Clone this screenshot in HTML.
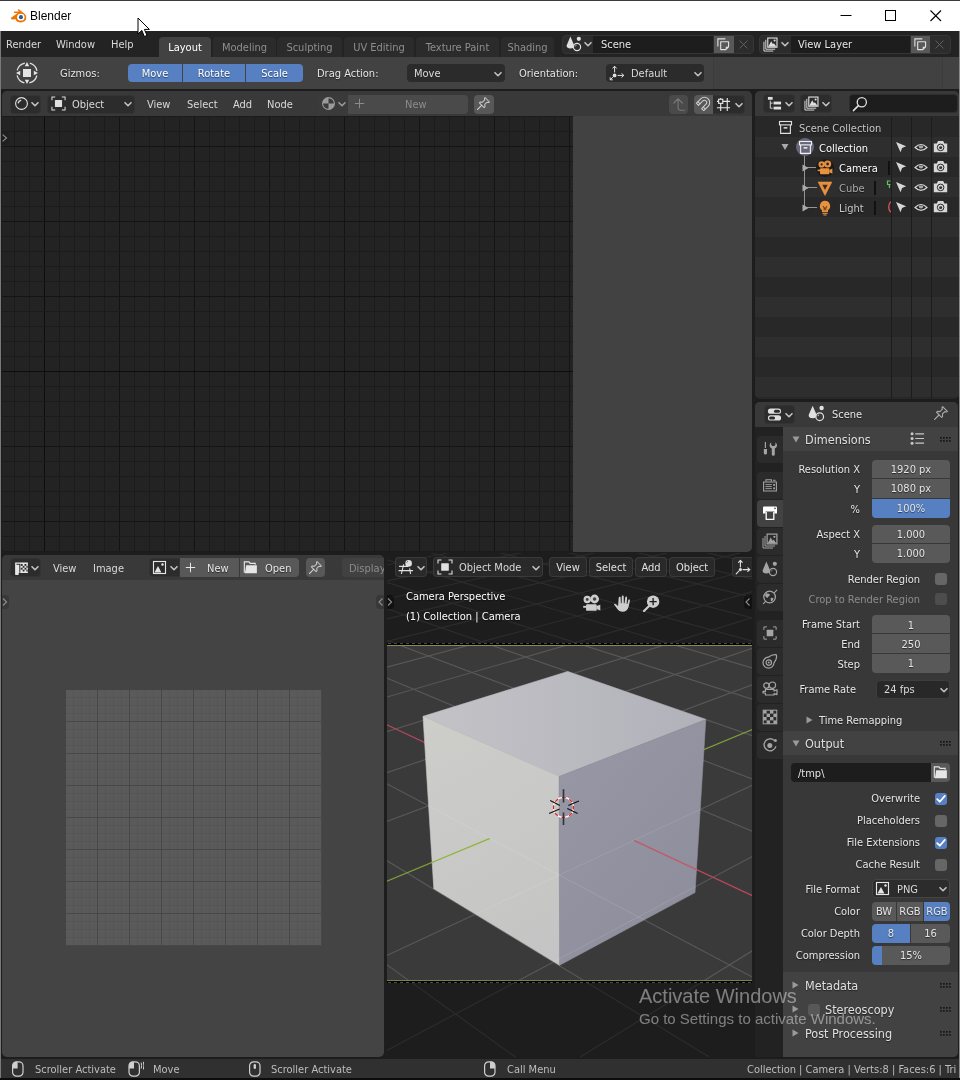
<!DOCTYPE html>
<html lang="en"><head><meta charset="utf-8"><title>Blender</title>
<style>
*{box-sizing:border-box;margin:0;padding:0}
html,body{width:960px;height:1080px;overflow:hidden;background:#1d1d1d}
body{position:relative;font-family:'DejaVu Sans Condensed','DejaVu Sans','Liberation Sans',sans-serif;font-size:11px;color:#e6e6e6;will-change:transform;-webkit-font-smoothing:antialiased}
div,svg{position:absolute}
.t{white-space:nowrap;line-height:14px;height:14px;font-size:11px;color:#e6e6e6;text-shadow:0 1px 1px rgba(0,0,0,.55)}
.m{white-space:nowrap;line-height:14px;height:14px;font-size:11px;color:#d9d9d9}
.d{white-space:nowrap;line-height:14px;height:14px;font-size:11px;color:#8c8c8c}
.r{text-align:right}
.c{text-align:center}
.h{white-space:nowrap;line-height:15px;height:15px;font-size:12.5px;color:#e0e0e0;text-shadow:0 1px 1px rgba(0,0,0,.55)}
</style></head>
<body>
<div style="left:0px;top:0px;width:960px;height:31px;background:#fff;border-top:1px solid #3a3a3a;"></div>
<svg style="left:10px;top:8px;" width="17" height="17" viewBox="0 0 16 16"><path d="M1 9.2 L7.2 4.6 L4.4 4.6 Q3.5 4.6 3.6 3.9 Q3.7 3.3 4.5 3.3 L8.9 3.3 L7.6 2.3 Q7 1.8 7.5 1.3 Q8 .9 8.6 1.3 L14 5.6 Q16 7.6 15.3 10.2 Q14.3 13.4 10.3 13.6 Q6.3 13.6 5.2 10.6 L2.2 10.9 Q.2 10.6 1 9.2Z" fill="#ea7600"/><ellipse cx="10.2" cy="8.6" rx="3.5" ry="3.2" fill="#fff"/><circle cx="10.3" cy="8.6" r="1.9" fill="#235b9c"/></svg>
<div style="left:30px;top:9px;font:12px 'Liberation Sans',sans-serif;color:#000;line-height:15px;white-space:nowrap">Blender</div>
<svg style="left:836px;top:5px;" width="110" height="22" viewBox="0 0 110 22"><path d="M4.5 10.5 H15.5" stroke="#000" stroke-width="1"/><rect x="49.5" y="5.5" width="10" height="10" fill="none" stroke="#000" stroke-width="1"/><path d="M94.5 5.5 L105 16 M105 5.5 L94.5 16" stroke="#000" stroke-width="1.1"/></svg>
<div style="left:0px;top:31px;width:960px;height:26px;background:#232323"></div>
<div class="m" style="left:6px;top:38px;">Render</div>
<div class="m" style="left:56px;top:38px;">Window</div>
<div class="m" style="left:111px;top:38px;">Help</div>
<div style="left:159px;top:37px;width:52px;height:20px;background:#424242;border-radius:4px 4px 0 0;text-align:center;line-height:21px;font-size:11px;color:#fff;overflow:hidden;white-space:nowrap">Layout</div>
<div style="left:213px;top:37px;width:63px;height:20px;background:#2b2b2b;border-radius:4px 4px 0 0;text-align:center;line-height:21px;font-size:11px;color:#8e8e8e;overflow:hidden;white-space:nowrap">Modeling</div>
<div style="left:277px;top:37px;width:65px;height:20px;background:#2b2b2b;border-radius:4px 4px 0 0;text-align:center;line-height:21px;font-size:11px;color:#8e8e8e;overflow:hidden;white-space:nowrap">Sculpting</div>
<div style="left:344px;top:37px;width:70px;height:20px;background:#2b2b2b;border-radius:4px 4px 0 0;text-align:center;line-height:21px;font-size:11px;color:#8e8e8e;overflow:hidden;white-space:nowrap">UV Editing</div>
<div style="left:416px;top:37px;width:83px;height:20px;background:#2b2b2b;border-radius:4px 4px 0 0;text-align:center;line-height:21px;font-size:11px;color:#8e8e8e;overflow:hidden;white-space:nowrap">Texture Paint</div>
<div style="left:501px;top:37px;width:53px;height:20px;background:#2b2b2b;border-radius:4px 4px 0 0;text-align:center;line-height:21px;font-size:11px;color:#8e8e8e;overflow:hidden;white-space:nowrap">Shading</div>
<div style="left:554px;top:31px;width:8px;height:26px;background:#232323"></div>
<div style="left:562px;top:35px;width:192px;height:19px;background:#2c2c2c;border-radius:4px;border:1px solid #363636"></div>
<svg style="left:566px;top:36px;" width="16" height="16" viewBox="0 0 16 16"><path d="M4.4 .6 L8.2 9.4 Q8 12.4 4.4 12.4 Q.6 12.4 .6 9.4Z" fill="#e0e0e0"/><circle cx="12.8" cy="2.8" r="2.1" fill="#e0e0e0"/><circle cx="11" cy="11" r="3.6" fill="#2c2c2c" stroke="#e0e0e0" stroke-width="1.2"/><path d="M9.2 10.4 A2 2 0 0 1 10.4 9.2" fill="none" stroke="#e0e0e0" stroke-width=".9"/></svg>
<svg style="left:583px;top:41px" width="10" height="7" viewBox="0 0 10 7"><path d="M2 1.7 L5 4.7 L8 1.7" fill="none" stroke="#c2c2c2" stroke-width="1.6" stroke-linecap="round" stroke-linejoin="round"/></svg>
<div style="left:593px;top:36px;width:120px;height:17px;background:#1d1d1d"></div>
<div class="t" style="left:601px;top:38px;">Scene</div>
<div style="left:714px;top:36px;width:20px;height:17px;background:#585858"></div>
<svg style="left:716px;top:37px;" width="15" height="15" viewBox="0 0 16 16"><path d="M2 10 V2 H10" fill="none" stroke="#e0e0e0" stroke-width="1.2"/><path d="M5 5 H13.4 V10.4 L10.4 13.4 H5Z" fill="none" stroke="#e0e0e0" stroke-width="1.2" stroke-linejoin="round"/><path d="M13.4 10.4 H10.4 V13.4Z" fill="#e0e0e0"/></svg>
<svg style="left:737px;top:38px;" width="13" height="13" viewBox="0 0 16 16"><path d="M3.5 3.5 L12.5 12.5 M12.5 3.5 L3.5 12.5" stroke="#636363" stroke-width="1.2" stroke-linecap="round"/></svg>
<div style="left:759px;top:35px;width:192px;height:19px;background:#2c2c2c;border-radius:4px;border:1px solid #363636"></div>
<svg style="left:763px;top:37px;" width="15" height="15" viewBox="0 0 16 16"><path d="M1 5 V15 H11" fill="none" stroke="#e0e0e0" stroke-width="1"/><path d="M3 3 V13 H13" fill="none" stroke="#e0e0e0" stroke-width="1"/><rect x="5.1" y="1.1" width="9.8" height="9.8" fill="#2c2c2c" stroke="#e0e0e0" stroke-width="1.2"/><path d="M5.6 10.4 L8.8 4.6 L10.6 7.8 L11.6 6.6 L14.4 10.4Z" fill="#e0e0e0"/><circle cx="12.4" cy="3.8" r="1.1" fill="#e0e0e0"/></svg>
<svg style="left:780px;top:41px" width="10" height="7" viewBox="0 0 10 7"><path d="M2 1.7 L5 4.7 L8 1.7" fill="none" stroke="#c2c2c2" stroke-width="1.6" stroke-linecap="round" stroke-linejoin="round"/></svg>
<div style="left:791px;top:36px;width:119px;height:17px;background:#1d1d1d"></div>
<div class="t" style="left:798px;top:38px;">View Layer</div>
<div style="left:911px;top:36px;width:19px;height:17px;background:#585858"></div>
<svg style="left:913px;top:37px;" width="15" height="15" viewBox="0 0 16 16"><path d="M2 10 V2 H10" fill="none" stroke="#e0e0e0" stroke-width="1.2"/><path d="M5 5 H13.4 V10.4 L10.4 13.4 H5Z" fill="none" stroke="#e0e0e0" stroke-width="1.2" stroke-linejoin="round"/><path d="M13.4 10.4 H10.4 V13.4Z" fill="#e0e0e0"/></svg>
<svg style="left:933px;top:38px;" width="13" height="13" viewBox="0 0 16 16"><path d="M3.5 3.5 L12.5 12.5 M12.5 3.5 L3.5 12.5" stroke="#636363" stroke-width="1.2" stroke-linecap="round"/></svg>
<div style="left:0px;top:57px;width:960px;height:32px;background:#424242"></div>
<div style="left:713px;top:57px;width:230px;height:32px;background:#414141;border-left:1px solid #3c3c3c;border-right:1px solid #3c3c3c"></div>
<svg style="left:15px;top:61px;" width="24" height="24" viewBox="0 0 24 24"><circle cx="12" cy="12" r="10.2" fill="none" stroke="#e4e4e4" stroke-width="1.2" stroke-dasharray="10.9 5.12" stroke-dashoffset="-2.56"/><rect x="8" y="8" width="8" height="8" fill="#e4e4e4"/><path d="M12 1 L14.2 5.2 H9.8Z M12 23 L14.2 18.8 H9.8Z M1 12 L5.2 9.8 V14.2Z M23 12 L18.8 9.8 V14.2Z" fill="#e4e4e4"/></svg>
<div class="t" style="left:60px;top:67px;">Gizmos:</div>
<div style="left:128px;top:64px;width:54px;height:18px;background:#5680c2;border-radius:4px 0 0 4px;text-align:center;line-height:19px;color:#fff;text-shadow:0 1px 1px rgba(0,0,0,.5)">Move</div>
<div style="left:183px;top:64px;width:62px;height:18px;background:#5680c2;border-radius:0;text-align:center;line-height:19px;color:#fff;text-shadow:0 1px 1px rgba(0,0,0,.5)">Rotate</div>
<div style="left:246px;top:64px;width:57px;height:18px;background:#5680c2;border-radius:0 4px 4px 0;text-align:center;line-height:19px;color:#fff;text-shadow:0 1px 1px rgba(0,0,0,.5)">Scale</div>
<div class="t" style="left:317px;top:67px;">Drag Action:</div>
<div style="left:407px;top:64px;width:98px;height:18px;background:#2b2b2b;border-radius:4px"></div>
<div class="m" style="left:414px;top:67px;">Move</div>
<svg style="left:493px;top:71px" width="10" height="7" viewBox="0 0 10 7"><path d="M2 1.7 L5 4.7 L8 1.7" fill="none" stroke="#c2c2c2" stroke-width="1.6" stroke-linecap="round" stroke-linejoin="round"/></svg>
<div class="t" style="left:519px;top:67px;">Orientation:</div>
<div style="left:606px;top:64px;width:98px;height:18px;background:#2b2b2b;border-radius:4px"></div>
<svg style="left:609px;top:65px;" width="16" height="16" viewBox="0 0 16 16"><circle cx="5.6" cy="10.4" r="1.9" fill="#e0e0e0"/><path d="M5.6 7 V1.4 M3.8 3.2 L5.6 1.2 L7.4 3.2 M9 10.4 H14.6 M12.8 8.6 L14.8 10.4 L12.8 12.2 M3.6 12.4 L1.2 14.8 M1.2 12.6 V14.8 H3.4" fill="none" stroke="#e0e0e0" stroke-width="1" stroke-linecap="round" stroke-linejoin="round"/></svg>
<div class="m" style="left:631px;top:67px;">Default</div>
<svg style="left:693px;top:71px" width="10" height="7" viewBox="0 0 10 7"><path d="M2 1.7 L5 4.7 L8 1.7" fill="none" stroke="#c2c2c2" stroke-width="1.6" stroke-linecap="round" stroke-linejoin="round"/></svg>
<div style="left:2px;top:91px;width:750px;height:461px;background:#232323;border-radius:5px;overflow:hidden">
<svg style="left:0px;top:0px;" width="750" height="461" viewBox="0 0 750 461"><path d="M12.5 25 V461" stroke="#1b1b1b"/><path d="M27.5 25 V461" stroke="#1b1b1b"/><path d="M42.5 25 V461" stroke="#0d0d0d"/><path d="M57.5 25 V461" stroke="#1b1b1b"/><path d="M72.5 25 V461" stroke="#1b1b1b"/><path d="M87.5 25 V461" stroke="#1b1b1b"/><path d="M102.5 25 V461" stroke="#1b1b1b"/><path d="M117.5 25 V461" stroke="#141414"/><path d="M132.5 25 V461" stroke="#1b1b1b"/><path d="M147.5 25 V461" stroke="#1b1b1b"/><path d="M162.5 25 V461" stroke="#1b1b1b"/><path d="M177.5 25 V461" stroke="#1b1b1b"/><path d="M192.5 25 V461" stroke="#141414"/><path d="M207.5 25 V461" stroke="#1b1b1b"/><path d="M222.5 25 V461" stroke="#1b1b1b"/><path d="M237.5 25 V461" stroke="#1b1b1b"/><path d="M252.5 25 V461" stroke="#1b1b1b"/><path d="M267.5 25 V461" stroke="#141414"/><path d="M282.5 25 V461" stroke="#1b1b1b"/><path d="M297.5 25 V461" stroke="#1b1b1b"/><path d="M312.5 25 V461" stroke="#1b1b1b"/><path d="M327.5 25 V461" stroke="#1b1b1b"/><path d="M342.5 25 V461" stroke="#141414"/><path d="M357.5 25 V461" stroke="#1b1b1b"/><path d="M372.5 25 V461" stroke="#1b1b1b"/><path d="M387.5 25 V461" stroke="#1b1b1b"/><path d="M402.5 25 V461" stroke="#1b1b1b"/><path d="M417.5 25 V461" stroke="#141414"/><path d="M432.5 25 V461" stroke="#1b1b1b"/><path d="M447.5 25 V461" stroke="#1b1b1b"/><path d="M462.5 25 V461" stroke="#1b1b1b"/><path d="M477.5 25 V461" stroke="#1b1b1b"/><path d="M492.5 25 V461" stroke="#141414"/><path d="M507.5 25 V461" stroke="#1b1b1b"/><path d="M522.5 25 V461" stroke="#1b1b1b"/><path d="M537.5 25 V461" stroke="#1b1b1b"/><path d="M552.5 25 V461" stroke="#1b1b1b"/><path d="M567.5 25 V461" stroke="#141414"/><path d="M0 25.5 H571" stroke="#1b1b1b"/><path d="M0 40.5 H571" stroke="#1b1b1b"/><path d="M0 55.5 H571" stroke="#141414"/><path d="M0 70.5 H571" stroke="#1b1b1b"/><path d="M0 85.5 H571" stroke="#1b1b1b"/><path d="M0 100.5 H571" stroke="#1b1b1b"/><path d="M0 115.5 H571" stroke="#1b1b1b"/><path d="M0 130.5 H571" stroke="#141414"/><path d="M0 145.5 H571" stroke="#1b1b1b"/><path d="M0 160.5 H571" stroke="#1b1b1b"/><path d="M0 175.5 H571" stroke="#1b1b1b"/><path d="M0 190.5 H571" stroke="#1b1b1b"/><path d="M0 205.5 H571" stroke="#141414"/><path d="M0 220.5 H571" stroke="#1b1b1b"/><path d="M0 235.5 H571" stroke="#1b1b1b"/><path d="M0 250.5 H571" stroke="#1b1b1b"/><path d="M0 265.5 H571" stroke="#1b1b1b"/><path d="M0 280.5 H571" stroke="#0d0d0d"/><path d="M0 295.5 H571" stroke="#1b1b1b"/><path d="M0 310.5 H571" stroke="#1b1b1b"/><path d="M0 325.5 H571" stroke="#1b1b1b"/><path d="M0 340.5 H571" stroke="#1b1b1b"/><path d="M0 355.5 H571" stroke="#141414"/><path d="M0 370.5 H571" stroke="#1b1b1b"/><path d="M0 385.5 H571" stroke="#1b1b1b"/><path d="M0 400.5 H571" stroke="#1b1b1b"/><path d="M0 415.5 H571" stroke="#1b1b1b"/><path d="M0 430.5 H571" stroke="#141414"/><path d="M0 445.5 H571" stroke="#1b1b1b"/><path d="M0 460.5 H571" stroke="#1b1b1b"/></svg>
<div style="left:571px;top:25px;width:179px;height:436px;background:#424242"></div>
<div style="left:0px;top:0px;width:750px;height:25px;background:#393939"></div>
<div style="left:8px;top:3.5px;width:31px;height:19px;background:#2c2c2c;border-radius:4px;border:1px solid #333"></div>
<svg style="left:12px;top:5px;" width="15" height="15" viewBox="0 0 16 16"><circle cx="8" cy="8" r="6.3" fill="none" stroke="#e0e0e0" stroke-width="1.2"/><path d="M4.6 7.2 A3.6 3.6 0 0 1 7.2 4.6" fill="none" stroke="#e0e0e0" stroke-width="1.4" stroke-linecap="round"/></svg>
<svg style="left:28px;top:10px" width="10" height="7" viewBox="0 0 10 7"><path d="M2 1.7 L5 4.7 L8 1.7" fill="none" stroke="#c2c2c2" stroke-width="1.6" stroke-linecap="round" stroke-linejoin="round"/></svg>
<div style="left:45px;top:3.5px;width:88px;height:19px;background:#2c2c2c;border-radius:4px;border:1px solid #333"></div>
<svg style="left:49px;top:5px;" width="15" height="15" viewBox="0 0 16 16"><rect x="4.2" y="4.2" width="7.6" height="7.6" rx=".6" fill="#e0e0e0"/><path d="M1 4.5 V1 H4.5 M11.5 1 H15 V4.5 M15 11.5 V15 H11.5 M4.5 15 H1 V11.5" fill="none" stroke="#e0e0e0" stroke-width="1.1"/></svg>
<div class="m" style="left:70px;top:7px;">Object</div>
<svg style="left:121px;top:10px" width="10" height="7" viewBox="0 0 10 7"><path d="M2 1.7 L5 4.7 L8 1.7" fill="none" stroke="#c2c2c2" stroke-width="1.6" stroke-linecap="round" stroke-linejoin="round"/></svg>
<div class="m" style="left:145px;top:7px;">View</div>
<div class="m" style="left:185px;top:7px;">Select</div>
<div class="m" style="left:231px;top:7px;">Add</div>
<div class="m" style="left:265px;top:7px;">Node</div>
<div style="left:317px;top:3.5px;width:149px;height:19px;background:#4a4a4a;border-radius:4px"></div>
<div style="left:317px;top:3.5px;width:29px;height:19px;background:#3a3a3a;border-radius:4px 0 0 4px"></div>
<svg style="left:319px;top:5px;" width="15" height="15" viewBox="0 0 16 16"><circle cx="8" cy="8" r="6.3" fill="none" stroke="#9a9a9a" stroke-width="1.2"/><path d="M8 1.7 A6.3 6.3 0 0 0 1.7 8 H8Z M8 8 H14.3 A6.3 6.3 0 0 1 8 14.3Z" fill="#9a9a9a"/></svg>
<svg style="left:335px;top:10px" width="10" height="7" viewBox="0 0 10 7"><path d="M2 1.7 L5 4.7 L8 1.7" fill="none" stroke="#999" stroke-width="1.6" stroke-linecap="round" stroke-linejoin="round"/></svg>
<svg style="left:350px;top:5px;" width="15" height="15" viewBox="0 0 16 16"><path d="M8 3 V13 M3 8 H13" stroke="#8a8a8a" stroke-width="1.1"/></svg>
<div class="d" style="left:403px;top:7px;">New</div>
<div style="left:472px;top:3.5px;width:20px;height:19px;background:#585858;border-radius:4px"></div>
<svg style="left:474px;top:5px;" width="15" height="15" viewBox="0 0 16 16"><path d="M9.6 1.6 L14.4 6.4 L13.2 7 L11.8 6.6 L9.4 9 L9.6 11.6 L8.6 12.4 L3.6 7.4 L4.4 6.4 L7 6.6 L9.4 4.2 L9 2.8Z" fill="none" stroke="#c8c8c8" stroke-width="1.1" stroke-linejoin="round"/><path d="M6 10 L1.6 14.4" stroke="#c8c8c8" stroke-width="1.2" stroke-linecap="round"/></svg>
<div style="left:667px;top:3.5px;width:19px;height:19px;background:#4a4a4a;border-radius:4px"></div>
<svg style="left:668px;top:4.5px;" width="17" height="17" viewBox="0 0 16 16"><path d="M3.6 6.6 L7.6 2.4 L11.6 6.6 M7.6 2.6 V11.6 Q7.6 13.4 9.4 13.4 H13.6" fill="none" stroke="#777" stroke-width="1.1" stroke-linecap="round" stroke-linejoin="round"/></svg>
<div style="left:692px;top:3.5px;width:19px;height:19px;background:#585858;border-radius:4px 0 0 4px"></div>
<svg style="left:694px;top:5px;" width="15" height="15" viewBox="0 0 16 16"><g transform="rotate(45 8 8)"><path d="M2.4 13.2 V6.6 A5.6 5.6 0 0 1 13.6 6.6 V13.2 H10.4 V6.6 A2.4 2.4 0 0 0 5.6 6.6 V13.2Z" fill="none" stroke="#d0d0d0" stroke-width="1.1" stroke-linejoin="round"/><path d="M2.4 10.8 H5.6 M10.4 10.8 H13.6" stroke="#d0d0d0" stroke-width="1.1"/></g></svg>
<div style="left:711px;top:3.5px;width:32px;height:19px;background:#2c2c2c;border-radius:0 4px 4px 0;border:1px solid #333;border-left:0"></div>
<svg style="left:714px;top:5.5px;" width="15" height="15" viewBox="0 0 16 16"><path d="M5 1 V15 M12 1 V15 M1 4.6 H15 M1 11.4 H15" fill="none" stroke="#e6e6e6" stroke-width="1.2"/><rect x="2.8" y="2.4" width="4.4" height="4.4" fill="#2b2b2b" stroke="#e6e6e6" stroke-width="1.2"/></svg>
<svg style="left:731.5px;top:10.5px" width="10" height="7" viewBox="0 0 10 7"><path d="M2 1.7 L5 4.7 L8 1.7" fill="none" stroke="#c2c2c2" stroke-width="1.6" stroke-linecap="round" stroke-linejoin="round"/></svg>
<div style="left:0px;top:41px;width:7px;height:12.5px;background:#1f1f1f;border-radius:0 4px 4px 0"></div>
<svg style="left:0px;top:41.5px;" width="7" height="10" viewBox="0 0 7 10"><path d="M.6 1.6 L4.6 5 L.6 8.4" fill="none" stroke="#8e8e8e" stroke-width="1.1"/></svg>
</div>
<div style="left:755px;top:91px;width:204px;height:308px;background:#282828;border-radius:5px;overflow:hidden">
<div style="left:0px;top:46px;width:204px;height:20px;background:#2e2e2e"></div>
<div style="left:0px;top:86px;width:204px;height:20px;background:#2e2e2e"></div>
<div style="left:0px;top:126px;width:204px;height:20px;background:#2e2e2e"></div>
<div style="left:0px;top:166px;width:204px;height:20px;background:#2e2e2e"></div>
<div style="left:0px;top:206px;width:204px;height:20px;background:#2e2e2e"></div>
<div style="left:0px;top:246px;width:204px;height:20px;background:#2e2e2e"></div>
<div style="left:0px;top:286px;width:204px;height:20px;background:#2e2e2e"></div>
<div style="left:0px;top:0px;width:204px;height:25px;background:#393939"></div>
<div style="left:8px;top:3px;width:32px;height:19px;background:#2c2c2c;border-radius:4px;border:1px solid #333"></div>
<svg style="left:12px;top:5px;" width="15" height="15" viewBox="0 0 16 16"><rect x="1" y="1" width="5" height="3" fill="#e0e0e0"/><rect x="7" y="6" width="8" height="3" fill="#e0e0e0"/><rect x="7" y="11.4" width="8" height="3" fill="#e0e0e0"/><path d="M3.5 5 V13 H6 M3.5 7.6 H6" fill="none" stroke="#e0e0e0" stroke-width="1"/></svg>
<svg style="left:29px;top:10px" width="10" height="7" viewBox="0 0 10 7"><path d="M2 1.7 L5 4.7 L8 1.7" fill="none" stroke="#c2c2c2" stroke-width="1.6" stroke-linecap="round" stroke-linejoin="round"/></svg>
<div style="left:45px;top:3px;width:32px;height:19px;background:#2c2c2c;border-radius:4px;border:1px solid #333"></div>
<svg style="left:49px;top:5px;" width="15" height="15" viewBox="0 0 16 16"><path d="M1 5 V15 H11" fill="none" stroke="#e0e0e0" stroke-width="1"/><path d="M3 3 V13 H13" fill="none" stroke="#e0e0e0" stroke-width="1"/><rect x="5.1" y="1.1" width="9.8" height="9.8" fill="#2c2c2c" stroke="#e0e0e0" stroke-width="1.2"/><path d="M5.6 10.4 L8.8 4.6 L10.6 7.8 L11.6 6.6 L14.4 10.4Z" fill="#e0e0e0"/><circle cx="12.4" cy="3.8" r="1.1" fill="#e0e0e0"/></svg>
<svg style="left:66px;top:10px" width="10" height="7" viewBox="0 0 10 7"><path d="M2 1.7 L5 4.7 L8 1.7" fill="none" stroke="#c2c2c2" stroke-width="1.6" stroke-linecap="round" stroke-linejoin="round"/></svg>
<div style="left:94px;top:3px;width:109px;height:19px;background:#1d1d1d;border-radius:4px;border:1px solid #2e2e2e"></div>
<svg style="left:97px;top:5px;" width="16" height="16" viewBox="0 0 16 16"><circle cx="9.8" cy="6.2" r="4.6" fill="none" stroke="#e0e0e0" stroke-width="1.3"/><path d="M6.4 9.6 L1.4 14.6" stroke="#e0e0e0" stroke-width="1.5" stroke-linecap="round"/></svg>
<div style="left:136px;top:26px;width:1px;height:308px;background:#1c1c1c"></div>
<div style="left:156px;top:26px;width:1px;height:308px;background:#1c1c1c"></div>
<div style="left:176px;top:26px;width:1px;height:308px;background:#1c1c1c"></div>
<svg style="left:23px;top:29px;" width="15" height="15" viewBox="0 0 16 16"><rect x="1.6" y="1.6" width="12.8" height="3.6" fill="none" stroke="#e0e0e0" stroke-width="1.2"/><path d="M2.8 5.4 V14.2 H13.2 V5.4" fill="none" stroke="#e0e0e0" stroke-width="1.2"/><rect x="6" y="7.6" width="4" height="1.6" fill="#e0e0e0"/></svg>
<div class="t" style="left:44px;top:31px;color:#c8c8c8">Scene Collection</div>
<svg style="left:26px;top:52px;" width="8" height="8" viewBox="0 0 8 8"><path d="M.5 1 H7.5 L4 7Z" fill="#aaa"/></svg>
<div style="left:41px;top:47px;width:18px;height:18px;background:#66667c;border-radius:50%"></div>
<svg style="left:42.5px;top:48.5px;" width="15" height="15" viewBox="0 0 16 16"><rect x="1.6" y="1.6" width="12.8" height="3.6" fill="none" stroke="#f0f0f0" stroke-width="1.2"/><path d="M2.8 5.4 V14.2 H13.2 V5.4" fill="none" stroke="#f0f0f0" stroke-width="1.2"/><rect x="6" y="7.6" width="4" height="1.6" fill="#f0f0f0"/></svg>
<div class="t" style="left:64px;top:51px;color:#fff">Collection</div>
<div style="left:49px;top:65px;width:1px;height:52px;background:#949494"></div>
<div style="left:49px;top:76px;width:13px;height:1px;background:#949494"></div>
<svg style="left:47px;top:73px;" width="7" height="8" viewBox="0 0 7 8"><path d="M.5 .5 L6.5 4 L.5 7.5Z" fill="#aaa"/></svg>
<div style="left:61px;top:68px;width:18px;height:18px;background:#1a1a1a;border-radius:50%"></div>
<svg style="left:62px;top:69px;" width="16" height="16" viewBox="0 0 16 16"><circle cx="4.6" cy="4.4" r="3.1" fill="#e9913c"/><circle cx="10.6" cy="4" r="3.6" fill="#e9913c"/><rect x="3" y="8.2" width="9.4" height="6" rx="1" fill="#e9913c"/><path d="M12.4 10 L15.4 8.6 V13.6 L12.4 12.4Z" fill="#e9913c"/><rect x=".6" y="9.6" width="2.6" height="1.6" fill="#e9913c"/><circle cx="4.6" cy="4.4" r="1.1" fill="#282828"/><circle cx="10.6" cy="4" r="1.4" fill="#282828"/></svg>
<div class="t" style="left:84px;top:71px;color:#fff">Camera</div>
<div style="left:133px;top:70px;width:2px;height:14px;background:#111"></div>
<div style="left:49px;top:96px;width:13px;height:1px;background:#949494"></div>
<svg style="left:47px;top:93px;" width="7" height="8" viewBox="0 0 7 8"><path d="M.5 .5 L6.5 4 L.5 7.5Z" fill="#aaa"/></svg>
<svg style="left:62px;top:89px;" width="16" height="16" viewBox="0 0 16 16"><path d="M1.1 2 H14.9 L8 15.4Z M4.9 4.4 L8 10.6 L11.1 4.4Z" fill="#e9913c" fill-rule="evenodd" stroke="#e9913c" stroke-width=".6" stroke-linejoin="round"/></svg>
<div class="t" style="left:84px;top:91px;color:#aaa">Cube</div>
<div style="left:119px;top:90px;width:2px;height:14px;background:#111"></div>
<svg style="left:131px;top:89px;" width="5" height="8" viewBox="0 0 5 8"><path d="M4.5 1 H1.5 V4.5 H4.5 M3.4 4.5 V8" fill="none" stroke="#5fc25f" stroke-width="1.2"/></svg>
<div style="left:49px;top:116px;width:13px;height:1px;background:#949494"></div>
<svg style="left:47px;top:113px;" width="7" height="8" viewBox="0 0 7 8"><path d="M.5 .5 L6.5 4 L.5 7.5Z" fill="#aaa"/></svg>
<svg style="left:62px;top:109px;" width="16" height="16" viewBox="0 0 16 16"><path d="M8 .8 A5.2 5.2 0 0 1 11 10.2 V12 H5 V10.2 A5.2 5.2 0 0 1 8 .8Z" fill="#e9913c"/><rect x="5.4" y="12.8" width="5.2" height="1.1" fill="#e9913c"/><rect x="6.4" y="14.5" width="3.2" height="1" fill="#e9913c"/><path d="M6 6 L7.2 8 V10.4 M10 6 L8.8 8 V10.4 M7.2 8 H8.8" fill="none" stroke="#282828" stroke-width=".8"/></svg>
<div class="t" style="left:84px;top:111px;color:#c8c8c8">Light</div>
<div style="left:119px;top:110px;width:2px;height:14px;background:#111"></div>
<svg style="left:131px;top:110px;" width="5" height="12" viewBox="0 0 5 12"><path d="M4.6 .6 Q.8 6 4.6 11.4" fill="none" stroke="#d85555" stroke-width="1.3"/></svg>
<svg style="left:138px;top:49px;" width="15" height="15" viewBox="0 0 16 16"><path d="M3.2 2.2 L14 6.7 L9.7 8.5 L8 13Z" fill="#d6d6d6"/></svg>
<svg style="left:158px;top:49px;" width="16" height="16" viewBox="0 0 16 16"><path d="M2 7.5 Q8 1.5 14 7.5 Q8 13.1 2 7.5Z" fill="none" stroke="#d6d6d6" stroke-width="1.1"/><path d="M5.7 6.3 A2.3 2.3 0 0 0 10.3 6.3 A4 4 0 0 0 5.7 6.3Z" fill="#a8a8a8"/></svg>
<svg style="left:178px;top:49px;" width="16" height="16" viewBox="0 0 16 16"><path d="M.8 3.4 H3.8 L5 1 H10.2 L11.4 3.4 H14.2 V12.2 H.8Z" fill="#d6d6d6"/><circle cx="7.6" cy="7.4" r="3.3" fill="none" stroke="#2a2a2a" stroke-width="1"/><circle cx="7.6" cy="7.4" r="1.5" fill="#2a2a2a"/><circle cx="7" cy="6.8" r=".5" fill="#d6d6d6"/></svg>
<svg style="left:138px;top:69px;" width="15" height="15" viewBox="0 0 16 16"><path d="M3.2 2.2 L14 6.7 L9.7 8.5 L8 13Z" fill="#d6d6d6"/></svg>
<svg style="left:158px;top:69px;" width="16" height="16" viewBox="0 0 16 16"><path d="M2 7.5 Q8 1.5 14 7.5 Q8 13.1 2 7.5Z" fill="none" stroke="#d6d6d6" stroke-width="1.1"/><path d="M5.7 6.3 A2.3 2.3 0 0 0 10.3 6.3 A4 4 0 0 0 5.7 6.3Z" fill="#a8a8a8"/></svg>
<svg style="left:178px;top:69px;" width="16" height="16" viewBox="0 0 16 16"><path d="M.8 3.4 H3.8 L5 1 H10.2 L11.4 3.4 H14.2 V12.2 H.8Z" fill="#d6d6d6"/><circle cx="7.6" cy="7.4" r="3.3" fill="none" stroke="#2a2a2a" stroke-width="1"/><circle cx="7.6" cy="7.4" r="1.5" fill="#2a2a2a"/><circle cx="7" cy="6.8" r=".5" fill="#d6d6d6"/></svg>
<svg style="left:138px;top:89px;" width="15" height="15" viewBox="0 0 16 16"><path d="M3.2 2.2 L14 6.7 L9.7 8.5 L8 13Z" fill="#d6d6d6"/></svg>
<svg style="left:158px;top:89px;" width="16" height="16" viewBox="0 0 16 16"><path d="M2 7.5 Q8 1.5 14 7.5 Q8 13.1 2 7.5Z" fill="none" stroke="#d6d6d6" stroke-width="1.1"/><path d="M5.7 6.3 A2.3 2.3 0 0 0 10.3 6.3 A4 4 0 0 0 5.7 6.3Z" fill="#a8a8a8"/></svg>
<svg style="left:178px;top:89px;" width="16" height="16" viewBox="0 0 16 16"><path d="M.8 3.4 H3.8 L5 1 H10.2 L11.4 3.4 H14.2 V12.2 H.8Z" fill="#d6d6d6"/><circle cx="7.6" cy="7.4" r="3.3" fill="none" stroke="#2a2a2a" stroke-width="1"/><circle cx="7.6" cy="7.4" r="1.5" fill="#2a2a2a"/><circle cx="7" cy="6.8" r=".5" fill="#d6d6d6"/></svg>
<svg style="left:138px;top:109px;" width="15" height="15" viewBox="0 0 16 16"><path d="M3.2 2.2 L14 6.7 L9.7 8.5 L8 13Z" fill="#d6d6d6"/></svg>
<svg style="left:158px;top:109px;" width="16" height="16" viewBox="0 0 16 16"><path d="M2 7.5 Q8 1.5 14 7.5 Q8 13.1 2 7.5Z" fill="none" stroke="#d6d6d6" stroke-width="1.1"/><path d="M5.7 6.3 A2.3 2.3 0 0 0 10.3 6.3 A4 4 0 0 0 5.7 6.3Z" fill="#a8a8a8"/></svg>
<svg style="left:178px;top:109px;" width="16" height="16" viewBox="0 0 16 16"><path d="M.8 3.4 H3.8 L5 1 H10.2 L11.4 3.4 H14.2 V12.2 H.8Z" fill="#d6d6d6"/><circle cx="7.6" cy="7.4" r="3.3" fill="none" stroke="#2a2a2a" stroke-width="1"/><circle cx="7.6" cy="7.4" r="1.5" fill="#2a2a2a"/><circle cx="7" cy="6.8" r=".5" fill="#d6d6d6"/></svg>
</div>
<div style="left:755px;top:402px;width:203px;height:655px;background:#383838;border-radius:5px;overflow:hidden">
<div style="left:0px;top:0px;width:203px;height:25px;background:#393939"></div>
<div style="left:0px;top:25px;width:28px;height:655px;background:#222"></div>
<div style="left:9px;top:3px;width:31px;height:19px;background:#2c2c2c;border-radius:4px;border:1px solid #333"></div>
<svg style="left:12px;top:5px;" width="15" height="15" viewBox="0 0 16 16"><rect x="1" y="1.6" width="14" height="5.6" rx="2.8" fill="#e0e0e0"/><rect x="1" y="8.8" width="14" height="5.6" rx="2.8" fill="#e0e0e0"/><rect x="7.4" y="2.8" width="6.4" height="3.2" rx="1.6" fill="#2c2c2c"/><rect x="2.2" y="10" width="6.4" height="3.2" rx="1.6" fill="#2c2c2c"/></svg>
<svg style="left:29px;top:10px" width="10" height="7" viewBox="0 0 10 7"><path d="M2 1.7 L5 4.7 L8 1.7" fill="none" stroke="#c2c2c2" stroke-width="1.6" stroke-linecap="round" stroke-linejoin="round"/></svg>
<svg style="left:53px;top:3px;" width="17" height="17" viewBox="0 0 16 16"><path d="M4.4 .6 L8.2 9.4 Q8 12.4 4.4 12.4 Q.6 12.4 .6 9.4Z" fill="#e0e0e0"/><circle cx="12.8" cy="2.8" r="2.1" fill="#e0e0e0"/><circle cx="11" cy="11" r="3.6" fill="#393939" stroke="#e0e0e0" stroke-width="1.2"/><path d="M9.2 10.4 A2 2 0 0 1 10.4 9.2" fill="none" stroke="#e0e0e0" stroke-width=".9"/></svg>
<div class="t" style="left:77px;top:6px;">Scene</div>
<svg style="left:178px;top:3px;" width="16" height="16" viewBox="0 0 16 16"><path d="M9.6 1.6 L14.4 6.4 L13.2 7 L11.8 6.6 L9.4 9 L9.6 11.6 L8.6 12.4 L3.6 7.4 L4.4 6.4 L7 6.6 L9.4 4.2 L9 2.8Z" fill="none" stroke="#aaa" stroke-width="1.1" stroke-linejoin="round"/><path d="M6 10 L1.6 14.4" stroke="#aaa" stroke-width="1.2" stroke-linecap="round"/></svg>
<div style="left:2px;top:34px;width:26px;height:27px;background:#2b2b2b;border-radius:4px 0 0 4px"></div>
<svg style="left:7.0px;top:39.0px;" width="16" height="16" viewBox="0 0 16 16"><path d="M3.4 1 V7" stroke="#a4a4a4" stroke-width="1.2"/><path d="M1.8 8 H5 V12 A1.6 1.6 0 0 1 1.8 12Z" fill="#a4a4a4"/><path d="M9.2 1.2 V4 L10.4 5 H12.2 L13.4 4 V1.2 Q15.4 2.6 15 5 Q14.6 6.8 12.8 7.4 V13.4 Q12.8 14.8 11.3 14.8 Q9.8 14.8 9.8 13.4 V7.4 Q8 6.8 7.6 5 Q7.2 2.6 9.2 1.2Z" fill="#a4a4a4"/></svg>
<div style="left:2px;top:70px;width:26px;height:27px;background:#2b2b2b;border-radius:4px 0 0 4px"></div>
<svg style="left:7.0px;top:75.0px;" width="16" height="16" viewBox="0 0 16 16"><path d="M1.6 5 H14.4 V14 H1.6Z" fill="none" stroke="#a4a4a4" stroke-width="1.1"/><path d="M4 4.6 V2.8 H9.4 V4.6" fill="none" stroke="#a4a4a4" stroke-width="1.1"/><path d="M3.4 7.6 H9.8 M3.4 9.6 H9.8 M3.4 11.6 H9.8" stroke="#a4a4a4" stroke-width=".9"/><rect x="11.2" y="7" width="1.8" height="1.8" fill="#a4a4a4"/><rect x="11.2" y="10.4" width="1.8" height="1.8" fill="#a4a4a4"/><rect x="11" y="2.8" width="2.6" height="1" fill="#a4a4a4"/></svg>
<div style="left:2px;top:98px;width:26px;height:27px;background:#424242;border-radius:4px 0 0 4px"></div>
<svg style="left:7.0px;top:103.0px;" width="16" height="16" viewBox="0 0 16 16"><path d="M1 2.4 Q1 1.4 2 1.4 H14 Q15 1.4 15 2.4 V8.6 H12.4 V6.6 H3.6 V8.6 H1Z" fill="#ffffff"/><path d="M4.2 7 V14.4 H11.8 V7" fill="none" stroke="#ffffff" stroke-width="1.3"/><circle cx="13" cy="3.4" r=".8" fill="#424242"/></svg>
<div style="left:2px;top:126px;width:26px;height:27px;background:#2b2b2b;border-radius:4px 0 0 4px"></div>
<svg style="left:7.0px;top:131.0px;" width="16" height="16" viewBox="0 0 16 16"><path d="M1 5 V15 H11" fill="none" stroke="#a4a4a4" stroke-width="1"/><path d="M3 3 V13 H13" fill="none" stroke="#a4a4a4" stroke-width="1"/><rect x="5.1" y="1.1" width="9.8" height="9.8" fill="#2b2b2b" stroke="#a4a4a4" stroke-width="1.2"/><path d="M5.6 10.4 L8.8 4.6 L10.6 7.8 L11.6 6.6 L14.4 10.4Z" fill="#a4a4a4"/><circle cx="12.4" cy="3.8" r="1.1" fill="#a4a4a4"/></svg>
<div style="left:2px;top:154px;width:26px;height:27px;background:#2b2b2b;border-radius:4px 0 0 4px"></div>
<svg style="left:7.0px;top:159.0px;" width="16" height="16" viewBox="0 0 16 16"><path d="M4.4 .6 L8.2 9.4 Q8 12.4 4.4 12.4 Q.6 12.4 .6 9.4Z" fill="#a4a4a4"/><circle cx="12.8" cy="2.8" r="2.1" fill="#a4a4a4"/><circle cx="11" cy="11" r="3.6" fill="#2b2b2b" stroke="#a4a4a4" stroke-width="1.2"/><path d="M9.2 10.4 A2 2 0 0 1 10.4 9.2" fill="none" stroke="#a4a4a4" stroke-width=".9"/></svg>
<div style="left:2px;top:182px;width:26px;height:27px;background:#2b2b2b;border-radius:4px 0 0 4px"></div>
<svg style="left:7.0px;top:187.0px;" width="16" height="16" viewBox="0 0 16 16"><circle cx="7.6" cy="8" r="5.8" fill="none" stroke="#a4a4a4" stroke-width="1.3"/><path d="M4 4 Q6 5 7 4.4 Q8.4 5.4 7.4 7 Q5.6 7.4 5.6 9 Q4 8.4 3 6.4Z M8.6 9 Q10.4 8.4 11.6 9.6 Q11 12 9 12.6 Q8.8 11 8.6 9Z" fill="#a4a4a4"/><path d="M1.4 14.6 L3.6 12.4 M12.4 3.6 L14.8 1.2" stroke="#a4a4a4" stroke-width="1.1" stroke-linecap="round"/></svg>
<div style="left:2px;top:218px;width:26px;height:27px;background:#2b2b2b;border-radius:4px 0 0 4px"></div>
<svg style="left:8.0px;top:224.0px;" width="14" height="14" viewBox="0 0 16 16"><rect x="4.2" y="4.2" width="7.6" height="7.6" rx=".6" fill="#a4a4a4"/><path d="M1 4.5 V1 H4.5 M11.5 1 H15 V4.5 M15 11.5 V15 H11.5 M4.5 15 H1 V11.5" fill="none" stroke="#a4a4a4" stroke-width="1.1"/></svg>
<div style="left:2px;top:246px;width:26px;height:27px;background:#2b2b2b;border-radius:4px 0 0 4px"></div>
<svg style="left:7.0px;top:251.0px;" width="16" height="16" viewBox="0 0 16 16"><path d="M14.4 1.8 Q15.2 5.6 12 9.8 A5.5 5.5 0 1 1 6.2 4.2 Q10.6 1 14.4 1.8Z" fill="none" stroke="#a4a4a4" stroke-width="1.2" stroke-linejoin="round"/><circle cx="6.8" cy="9.6" r="2.7" fill="none" stroke="#a4a4a4" stroke-width="1.2"/><circle cx="6.8" cy="9.6" r="1" fill="#a4a4a4"/></svg>
<div style="left:2px;top:274px;width:26px;height:27px;background:#2b2b2b;border-radius:4px 0 0 4px"></div>
<svg style="left:7.0px;top:279.0px;" width="16" height="16" viewBox="0 0 16 16"><circle cx="4.4" cy="4.6" r="2.7" fill="none" stroke="#a4a4a4" stroke-width="1.2"/><circle cx="10.4" cy="4.2" r="3.2" fill="none" stroke="#a4a4a4" stroke-width="1.2"/><path d="M3.4 8.4 H12 V10 L15 8.8 V13.6 L12 12.6 V14 H3.4 V12 H1 V10.4 H3.4Z" fill="none" stroke="#a4a4a4" stroke-width="1.2" stroke-linejoin="round"/></svg>
<div style="left:2px;top:302px;width:26px;height:27px;background:#2b2b2b;border-radius:4px 0 0 4px"></div>
<svg style="left:7.0px;top:307.0px;" width="16" height="16" viewBox="0 0 16 16"><rect x="1.2" y="1.2" width="13.6" height="13.6" fill="none" stroke="#a4a4a4" stroke-width="1"/><rect x="1.2" y="1.2" width="3.4" height="3.4" fill="#a4a4a4"/><rect x="8.0" y="1.2" width="3.4" height="3.4" fill="#a4a4a4"/><rect x="4.6" y="4.6" width="3.4" height="3.4" fill="#a4a4a4"/><rect x="11.399999999999999" y="4.6" width="3.4" height="3.4" fill="#a4a4a4"/><rect x="1.2" y="8.0" width="3.4" height="3.4" fill="#a4a4a4"/><rect x="8.0" y="8.0" width="3.4" height="3.4" fill="#a4a4a4"/><rect x="4.6" y="11.399999999999999" width="3.4" height="3.4" fill="#a4a4a4"/><rect x="11.399999999999999" y="11.399999999999999" width="3.4" height="3.4" fill="#a4a4a4"/></svg>
<div style="left:2px;top:330px;width:26px;height:27px;background:#2b2b2b;border-radius:4px 0 0 4px"></div>
<svg style="left:7.0px;top:335.0px;" width="16" height="16" viewBox="0 0 16 16"><path d="M12.2 3.4 A6 6 0 1 0 13.8 9.6" fill="none" stroke="#a4a4a4" stroke-width="1.3" stroke-linecap="round"/><circle cx="7.8" cy="8.4" r="2.5" fill="#a4a4a4"/><circle cx="13.4" cy="3.4" r="1.5" fill="#a4a4a4"/></svg>
<div style="left:28px;top:25px;width:175px;height:24px;background:#424242"></div>
<svg style="left:37px;top:34px;" width="8" height="7" viewBox="0 0 8 7"><path d="M.5 .5 H7.5 L4 6.5Z" fill="#9a9a9a"/></svg>
<div class="h" style="left:50px;top:30px;">Dimensions</div>
<svg style="left:155px;top:29px;" width="15" height="15" viewBox="0 0 16 16"><circle cx="2.2" cy="3" r="1.6" fill="#c8c8c8"/><circle cx="2.2" cy="8" r="1.6" fill="#c8c8c8"/><circle cx="2.2" cy="13" r="1.6" fill="#c8c8c8"/><path d="M5.6 3 H15 M5.6 8 H15 M5.6 13 H15" stroke="#c8c8c8" stroke-width="1.3"/></svg>
<svg style="left:184.60000000000002px;top:34.60000000000002px;" width="11" height="5" viewBox="0 0 11 5"><rect x="0" y="0" width="1.7" height="1.7" fill="#181818"/><rect x="3" y="0" width="1.7" height="1.7" fill="#181818"/><rect x="6" y="0" width="1.7" height="1.7" fill="#181818"/><rect x="9" y="0" width="1.7" height="1.7" fill="#181818"/><rect x="0" y="3" width="1.7" height="1.7" fill="#181818"/><rect x="3" y="3" width="1.7" height="1.7" fill="#181818"/><rect x="6" y="3" width="1.7" height="1.7" fill="#181818"/><rect x="9" y="3" width="1.7" height="1.7" fill="#181818"/></svg>
<div class="t r" style="right:98px;top:61px">Resolution X</div>
<div style="left:117px;top:58px;width:78px;height:18px;background:#595959;border-radius:4px 4px 0 0"><div class="t c" style="left:0;top:3px;width:78px;color:#e6e6e6">1920 px</div></div>
<div class="t r" style="right:98px;top:81px">Y</div>
<div style="left:117px;top:77px;width:78px;height:19px;background:#595959;border-radius:0"><div class="t c" style="left:0;top:3px;width:78px;color:#e6e6e6">1080 px</div></div>
<div class="t r" style="right:98px;top:101px">%</div>
<div style="left:117px;top:97px;width:78px;height:19px;background:#5680c2;border-radius:0 0 4px 4px"><div class="t c" style="left:0;top:3px;width:78px;color:#e6e6e6">100%</div></div>
<div class="t r" style="right:98px;top:126px">Aspect X</div>
<div style="left:117px;top:123px;width:78px;height:18px;background:#595959;border-radius:4px 4px 0 0"><div class="t c" style="left:0;top:3px;width:78px;color:#e6e6e6">1.000</div></div>
<div class="t r" style="right:98px;top:146px">Y</div>
<div style="left:117px;top:142px;width:78px;height:19px;background:#595959;border-radius:0 0 4px 4px"><div class="t c" style="left:0;top:3px;width:78px;color:#e6e6e6">1.000</div></div>
<div class="t r" style="right:38px;top:171px">Render Region</div>
<div style="left:180px;top:171px;width:12px;height:12px;background:#666;border-radius:3px"></div>
<div class="d r" style="right:38px;top:191px">Crop to Render Region</div>
<div style="left:180px;top:191px;width:12px;height:12px;background:#4d4d4d;border-radius:3px"></div>
<div class="t r" style="right:98px;top:216px">Frame Start</div>
<div style="left:117px;top:213px;width:78px;height:18px;background:#595959;border-radius:4px 4px 0 0"><div class="t c" style="left:0;top:4px;width:78px;color:#e6e6e6">1</div></div>
<div class="t r" style="right:98px;top:236px">End</div>
<div style="left:117px;top:232px;width:78px;height:19px;background:#595959;border-radius:0"><div class="t c" style="left:0;top:4px;width:78px;color:#e6e6e6">250</div></div>
<div class="t r" style="right:98px;top:256px">Step</div>
<div style="left:117px;top:252px;width:78px;height:19px;background:#595959;border-radius:0 0 4px 4px"><div class="t c" style="left:0;top:3px;width:78px;color:#e6e6e6">1</div></div>
<div class="t r" style="right:102px;top:281px">Frame Rate</div>
<div style="left:121px;top:278px;width:74px;height:19px;background:#282828;border-radius:4px;border:1px solid #3d3d3d"></div>
<div class="m" style="left:129px;top:281px;">24 fps</div>
<svg style="left:184px;top:285px" width="10" height="7" viewBox="0 0 10 7"><path d="M2 1.7 L5 4.7 L8 1.7" fill="none" stroke="#c2c2c2" stroke-width="1.6" stroke-linecap="round" stroke-linejoin="round"/></svg>
<svg style="left:51px;top:314px;" width="7" height="8" viewBox="0 0 7 8"><path d="M.5 .5 L6.5 4 L.5 7.5Z" fill="#9a9a9a"/></svg>
<div class="t" style="left:64px;top:312px;">Time Remapping</div>
<div style="left:28px;top:329px;width:175px;height:24px;background:#424242"></div>
<svg style="left:37px;top:338px;" width="8" height="7" viewBox="0 0 8 7"><path d="M.5 .5 H7.5 L4 6.5Z" fill="#9a9a9a"/></svg>
<div class="h" style="left:50px;top:334px;">Output</div>
<svg style="left:184.60000000000002px;top:338.6px;" width="11" height="5" viewBox="0 0 11 5"><rect x="0" y="0" width="1.7" height="1.7" fill="#181818"/><rect x="3" y="0" width="1.7" height="1.7" fill="#181818"/><rect x="6" y="0" width="1.7" height="1.7" fill="#181818"/><rect x="9" y="0" width="1.7" height="1.7" fill="#181818"/><rect x="0" y="3" width="1.7" height="1.7" fill="#181818"/><rect x="3" y="3" width="1.7" height="1.7" fill="#181818"/><rect x="6" y="3" width="1.7" height="1.7" fill="#181818"/><rect x="9" y="3" width="1.7" height="1.7" fill="#181818"/></svg>
<div style="left:36px;top:361px;width:140px;height:19px;background:#1d1d1d;border-radius:4px 0 0 4px"></div>
<div class="t" style="left:43px;top:365px;">/tmp\</div>
<div style="left:176px;top:361px;width:19px;height:19px;background:#595959;border-radius:0 4px 4px 0"></div>
<svg style="left:178px;top:363px;" width="15" height="15" viewBox="0 0 16 16"><path d="M1.4 13.6 V2 H6.4 L7.6 3.6 H13 V5" fill="none" stroke="#e6e6e6" stroke-width="1.2"/><path d="M3.4 5.6 H14.8 V14 H2Z" fill="#e6e6e6"/></svg>
<div class="t r" style="right:38px;top:390px">Overwrite</div>
<div style="left:180px;top:391px;width:12px;height:12px;background:#5680c2;border-radius:3px"><svg style="left:0px;top:0px" width="12" height="12" viewBox="0 0 11 11"><path d="M2 5.6 L4.4 8 L9 2.6" fill="none" stroke="#fff" stroke-width="1.6" stroke-linecap="round" stroke-linejoin="round"/></svg></div>
<div class="t r" style="right:38px;top:412px">Placeholders</div>
<div style="left:180px;top:413px;width:12px;height:12px;background:#666;border-radius:3px"></div>
<div class="t r" style="right:38px;top:434px">File Extensions</div>
<div style="left:180px;top:435px;width:12px;height:12px;background:#5680c2;border-radius:3px"><svg style="left:0px;top:0px" width="12" height="12" viewBox="0 0 11 11"><path d="M2 5.6 L4.4 8 L9 2.6" fill="none" stroke="#fff" stroke-width="1.6" stroke-linecap="round" stroke-linejoin="round"/></svg></div>
<div class="t r" style="right:38px;top:456px">Cache Result</div>
<div style="left:180px;top:457px;width:12px;height:12px;background:#666;border-radius:3px"></div>
<div class="t r" style="right:98px;top:481px">File Format</div>
<div style="left:117px;top:477px;width:78px;height:19px;background:#2c2c2c;border-radius:4px;border:1px solid #444"></div>
<svg style="left:120px;top:479px;" width="15" height="15" viewBox="0 0 16 16"><rect x="1.6" y="1.6" width="12.8" height="12.8" fill="none" stroke="#e6e6e6" stroke-width="1.2"/><path d="M2.6 13.4 L6.4 6.4 L10 13.4Z" fill="#e6e6e6"/><circle cx="11.2" cy="4.8" r="1.3" fill="#e6e6e6"/></svg>
<div class="m" style="left:142px;top:481px;">PNG</div>
<svg style="left:183px;top:484px" width="10" height="7" viewBox="0 0 10 7"><path d="M2 1.7 L5 4.7 L8 1.7" fill="none" stroke="#c2c2c2" stroke-width="1.6" stroke-linecap="round" stroke-linejoin="round"/></svg>
<div class="t r" style="right:98px;top:503px">Color</div>
<div style="left:117px;top:500px;width:24px;height:19px;background:#595959;border-radius:4px 0 0 4px"><div class="t c" style="left:0;top:3px;width:24px;color:#e6e6e6">BW</div></div>
<div style="left:142px;top:500px;width:26px;height:19px;background:#595959;border-radius:0"><div class="t c" style="left:0;top:3px;width:26px;color:#e6e6e6">RGB</div></div>
<div style="left:169px;top:500px;width:26px;height:19px;background:#5680c2;border-radius:0 4px 4px 0"><div class="t c" style="left:0;top:3px;width:26px;color:#e6e6e6">RGB</div></div>
<div class="t r" style="right:98px;top:525px">Color Depth</div>
<div style="left:117px;top:522px;width:38px;height:19px;background:#5680c2;border-radius:4px 0 0 4px"><div class="t c" style="left:0;top:3px;width:38px;color:#e6e6e6">8</div></div>
<div style="left:156px;top:522px;width:39px;height:19px;background:#595959;border-radius:0 4px 4px 0"><div class="t c" style="left:0;top:3px;width:39px;color:#e6e6e6">16</div></div>
<div class="t r" style="right:98px;top:547px">Compression</div>
<div style="left:117px;top:544px;width:78px;height:19px;background:linear-gradient(90deg,#5680c2 10px,#595959 10px);border-radius:4px;"><div class="t c" style="left:0;top:3px;width:78px">15%</div></div>
<div style="left:28px;top:570px;width:175px;height:100px;background:#424242"></div>
<div style="left:28px;top:571px;width:175px;height:24px;background:#424242"></div>
<svg style="left:37px;top:579px;" width="7" height="8" viewBox="0 0 7 8"><path d="M.5 .5 L6.5 4 L.5 7.5Z" fill="#9a9a9a"/></svg>
<div class="h" style="left:50px;top:576px;">Metadata</div>
<svg style="left:184.60000000000002px;top:580.6px;" width="11" height="5" viewBox="0 0 11 5"><rect x="0" y="0" width="1.7" height="1.7" fill="#181818"/><rect x="3" y="0" width="1.7" height="1.7" fill="#181818"/><rect x="6" y="0" width="1.7" height="1.7" fill="#181818"/><rect x="9" y="0" width="1.7" height="1.7" fill="#181818"/><rect x="0" y="3" width="1.7" height="1.7" fill="#181818"/><rect x="3" y="3" width="1.7" height="1.7" fill="#181818"/><rect x="6" y="3" width="1.7" height="1.7" fill="#181818"/><rect x="9" y="3" width="1.7" height="1.7" fill="#181818"/></svg>
<div style="left:28px;top:595px;width:175px;height:24px;background:#424242"></div>
<svg style="left:37px;top:603px;" width="7" height="8" viewBox="0 0 7 8"><path d="M.5 .5 L6.5 4 L.5 7.5Z" fill="#9a9a9a"/></svg>
<div class="h" style="left:70px;top:600px;">Stereoscopy</div>
<svg style="left:184.60000000000002px;top:604.6px;" width="11" height="5" viewBox="0 0 11 5"><rect x="0" y="0" width="1.7" height="1.7" fill="#181818"/><rect x="3" y="0" width="1.7" height="1.7" fill="#181818"/><rect x="6" y="0" width="1.7" height="1.7" fill="#181818"/><rect x="9" y="0" width="1.7" height="1.7" fill="#181818"/><rect x="0" y="3" width="1.7" height="1.7" fill="#181818"/><rect x="3" y="3" width="1.7" height="1.7" fill="#181818"/><rect x="6" y="3" width="1.7" height="1.7" fill="#181818"/><rect x="9" y="3" width="1.7" height="1.7" fill="#181818"/></svg>
<div style="left:52.5px;top:601.5px;width:12px;height:12px;background:#585858;border-radius:3px"></div>
<div style="left:28px;top:619px;width:175px;height:24px;background:#424242"></div>
<svg style="left:37px;top:627px;" width="7" height="8" viewBox="0 0 7 8"><path d="M.5 .5 L6.5 4 L.5 7.5Z" fill="#9a9a9a"/></svg>
<div class="h" style="left:50px;top:624px;">Post Processing</div>
<svg style="left:184.60000000000002px;top:628.5999999999999px;" width="11" height="5" viewBox="0 0 11 5"><rect x="0" y="0" width="1.7" height="1.7" fill="#181818"/><rect x="3" y="0" width="1.7" height="1.7" fill="#181818"/><rect x="6" y="0" width="1.7" height="1.7" fill="#181818"/><rect x="9" y="0" width="1.7" height="1.7" fill="#181818"/><rect x="0" y="3" width="1.7" height="1.7" fill="#181818"/><rect x="3" y="3" width="1.7" height="1.7" fill="#181818"/><rect x="6" y="3" width="1.7" height="1.7" fill="#181818"/><rect x="9" y="3" width="1.7" height="1.7" fill="#181818"/></svg>
</div>
<div style="left:2px;top:555px;width:382px;height:502px;background:#444;border-radius:5px;overflow:hidden">
<svg style="left:64px;top:135px;" width="256" height="256" viewBox="0 0 256 256"><rect x="0" y="0" width="256" height="256" fill="#5a5a5a"/><path d="M7.5 0 V256 M0 7.5 H256" stroke="#555"/><path d="M15.5 0 V256 M0 15.5 H256" stroke="#555"/><path d="M23.5 0 V256 M0 23.5 H256" stroke="#555"/><path d="M39.5 0 V256 M0 39.5 H256" stroke="#555"/><path d="M47.5 0 V256 M0 47.5 H256" stroke="#555"/><path d="M55.5 0 V256 M0 55.5 H256" stroke="#555"/><path d="M71.5 0 V256 M0 71.5 H256" stroke="#555"/><path d="M79.5 0 V256 M0 79.5 H256" stroke="#555"/><path d="M87.5 0 V256 M0 87.5 H256" stroke="#555"/><path d="M103.5 0 V256 M0 103.5 H256" stroke="#555"/><path d="M111.5 0 V256 M0 111.5 H256" stroke="#555"/><path d="M119.5 0 V256 M0 119.5 H256" stroke="#555"/><path d="M135.5 0 V256 M0 135.5 H256" stroke="#555"/><path d="M143.5 0 V256 M0 143.5 H256" stroke="#555"/><path d="M151.5 0 V256 M0 151.5 H256" stroke="#555"/><path d="M167.5 0 V256 M0 167.5 H256" stroke="#555"/><path d="M175.5 0 V256 M0 175.5 H256" stroke="#555"/><path d="M183.5 0 V256 M0 183.5 H256" stroke="#555"/><path d="M199.5 0 V256 M0 199.5 H256" stroke="#555"/><path d="M207.5 0 V256 M0 207.5 H256" stroke="#555"/><path d="M215.5 0 V256 M0 215.5 H256" stroke="#555"/><path d="M231.5 0 V256 M0 231.5 H256" stroke="#555"/><path d="M239.5 0 V256 M0 239.5 H256" stroke="#555"/><path d="M247.5 0 V256 M0 247.5 H256" stroke="#555"/><path d="M31.5 0 V256 M0 31.5 H256" stroke="#474747" stroke-width="1"/><path d="M63.5 0 V256 M0 63.5 H256" stroke="#474747" stroke-width="1"/><path d="M95.5 0 V256 M0 95.5 H256" stroke="#474747" stroke-width="1"/><path d="M127.5 0 V256 M0 127.5 H256" stroke="#474747" stroke-width="1"/><path d="M159.5 0 V256 M0 159.5 H256" stroke="#474747" stroke-width="1"/><path d="M191.5 0 V256 M0 191.5 H256" stroke="#474747" stroke-width="1"/><path d="M223.5 0 V256 M0 223.5 H256" stroke="#474747" stroke-width="1"/><path d="M255.5 0 V256 M0 255.5 H256" stroke="#474747" stroke-width="1"/></svg>
<div style="left:0px;top:0px;width:382px;height:25px;background:#393939"></div>
<div style="left:7.5px;top:3px;width:31px;height:19px;background:#2c2c2c;border-radius:4px;border:1px solid #333"></div>
<svg style="left:11.5px;top:5.5px;" width="15" height="15" viewBox="0 0 16 16"><path d="M1.2 1.6 H14.8 V12.8 H5 V14.6 Q3 15.2 1.2 14.6Z" fill="#e6e6e6"/><path d="M2.6 3.4 H6.2 V12.6" fill="none" stroke="#2c2c2c" stroke-width="1.1"/><rect x="7.2" y="3.2" width="2" height="2" fill="#2c2c2c"/><rect x="9.2" y="5.2" width="2" height="2" fill="#2c2c2c"/><rect x="11.2" y="3.2" width="2" height="2" fill="#2c2c2c"/><rect x="7.2" y="7.2" width="2" height="2" fill="#2c2c2c"/><rect x="11.2" y="7.2" width="2" height="2" fill="#2c2c2c"/><rect x="9.2" y="9.2" width="2" height="2" fill="#2c2c2c"/><rect x="13.2" y="5.2" width="1.4" height="2" fill="#2c2c2c"/><rect x="13.2" y="9.2" width="1.4" height="2" fill="#2c2c2c"/></svg>
<svg style="left:28px;top:10px" width="10" height="7" viewBox="0 0 10 7"><path d="M2 1.7 L5 4.7 L8 1.7" fill="none" stroke="#c2c2c2" stroke-width="1.6" stroke-linecap="round" stroke-linejoin="round"/></svg>
<div class="m" style="left:51px;top:7px;">View</div>
<div class="m" style="left:91px;top:7px;">Image</div>
<div style="left:147px;top:3px;width:31px;height:19px;background:#2c2c2c;border-radius:4px 0 0 4px;border:1px solid #333"></div>
<svg style="left:150px;top:5px;" width="15" height="15" viewBox="0 0 16 16"><rect x="1.6" y="1.6" width="12.8" height="12.8" fill="none" stroke="#e6e6e6" stroke-width="1.2"/><path d="M2.6 13.4 L6.4 6.4 L10 13.4Z" fill="#e6e6e6"/><circle cx="11.2" cy="4.8" r="1.3" fill="#e6e6e6"/></svg>
<svg style="left:167px;top:10px" width="10" height="7" viewBox="0 0 10 7"><path d="M2 1.7 L5 4.7 L8 1.7" fill="none" stroke="#c2c2c2" stroke-width="1.6" stroke-linecap="round" stroke-linejoin="round"/></svg>
<div style="left:178px;top:3px;width:59px;height:19px;background:#585858"></div>
<svg style="left:181px;top:5px;" width="15" height="15" viewBox="0 0 16 16"><path d="M8 3 V13 M3 8 H13" stroke="#e6e6e6" stroke-width="1.1"/></svg>
<div class="t" style="left:205px;top:7px;">New</div>
<div style="left:238px;top:3px;width:59px;height:19px;background:#585858;border-radius:0 4px 4px 0"></div>
<svg style="left:241px;top:5px;" width="15" height="15" viewBox="0 0 16 16"><path d="M1.4 13.6 V2 H6.4 L7.6 3.6 H13 V5" fill="none" stroke="#e6e6e6" stroke-width="1.2"/><path d="M3.4 5.6 H14.8 V14 H2Z" fill="#e6e6e6"/></svg>
<div class="t" style="left:263px;top:7px;">Open</div>
<div style="left:304px;top:3px;width:19px;height:19px;background:#585858;border-radius:4px"></div>
<svg style="left:306px;top:5px;" width="15" height="15" viewBox="0 0 16 16"><path d="M9.6 1.6 L14.4 6.4 L13.2 7 L11.8 6.6 L9.4 9 L9.6 11.6 L8.6 12.4 L3.6 7.4 L4.4 6.4 L7 6.6 L9.4 4.2 L9 2.8Z" fill="none" stroke="#c8c8c8" stroke-width="1.1" stroke-linejoin="round"/><path d="M6 10 L1.6 14.4" stroke="#c8c8c8" stroke-width="1.2" stroke-linecap="round"/></svg>
<div style="left:340px;top:3px;width:60px;height:19px;background:#414141;border-radius:4px"></div>
<div class="d" style="left:347px;top:7px;">Display</div>
<div style="left:0px;top:40px;width:7px;height:14px;background:#383838;border-radius:0 4px 4px 0"></div>
<svg style="left:0px;top:42px;" width="7" height="10" viewBox="0 0 7 10"><path d="M1 1.5 L4.6 5 L1 8.5" fill="none" stroke="#8e8e8e" stroke-width="1.1"/></svg>
<div style="left:374px;top:40px;width:8px;height:14px;background:#383838;border-radius:4px 0 0 4px"></div>
<svg style="left:375px;top:42px;" width="7" height="10" viewBox="0 0 7 10"><path d="M5.5 1.5 L2 5 L5.5 8.5" fill="none" stroke="#8e8e8e" stroke-width="1.1"/></svg>
</div>
<div style="left:387px;top:553px;width:365px;height:504px;background:#3a3a3a;border-radius:5px;overflow:hidden">
<svg style="left:0px;top:0px;" width="365" height="504" viewBox="0 0 365 504"><path d="M-4618.2 192.3 L206.8 -180.6" stroke="#585858" stroke-width="1.15" opacity="1"/><path d="M-4618.2 192.3 L-94236.4 11699.2" stroke="#585858" stroke-width="1.15" opacity="1"/><path d="M-4815.2 217.6 L219.2 -179.5" stroke="#585858" stroke-width="1.15" opacity="1"/><path d="M-4339.0 170.7 L-91264.1 11699.2" stroke="#585858" stroke-width="1.15" opacity="1"/><path d="M-5034.5 245.7 L231.9 -178.5" stroke="#585858" stroke-width="1.15" opacity="1"/><path d="M-4084.2 151.0 L-88291.8 11699.2" stroke="#585858" stroke-width="1.15" opacity="1"/><path d="M-5280.3 277.3 L244.8 -177.4" stroke="#585858" stroke-width="1.15" opacity="1"/><path d="M-3851.0 133.0 L-85319.5 11699.2" stroke="#585858" stroke-width="1.15" opacity="1"/><path d="M-5557.8 312.9 L258.1 -176.3" stroke="#585858" stroke-width="1.15" opacity="1"/><path d="M-3636.5 116.4 L-82347.2 11699.2" stroke="#585858" stroke-width="1.15" opacity="1"/><path d="M-5873.2 353.4 L271.6 -175.2" stroke="#585858" stroke-width="1.15" opacity="1"/><path d="M-3438.7 101.1 L-79375.0 11699.2" stroke="#585858" stroke-width="1.15" opacity="1"/><path d="M-6235.2 399.9 L285.5 -174.0" stroke="#585858" stroke-width="1.15" opacity="1"/><path d="M-3255.7 87.0 L-76402.7 11699.2" stroke="#585858" stroke-width="1.15" opacity="1"/><path d="M-6654.8 453.8 L299.7 -172.9" stroke="#585858" stroke-width="1.15" opacity="1"/><path d="M-3085.9 73.9 L-73430.5 11699.1" stroke="#585858" stroke-width="1.15" opacity="1"/><path d="M-7146.9 517.0 L314.1 -171.7" stroke="#585858" stroke-width="1.15" opacity="1"/><path d="M-2927.9 61.7 L-70458.2 11699.1" stroke="#585858" stroke-width="1.15" opacity="1"/><path d="M-7732.1 592.1 L329.0 -170.4" stroke="#585858" stroke-width="1.15" opacity="1"/><path d="M-2780.5 50.3 L-67486.0 11699.1" stroke="#585858" stroke-width="1.15" opacity="1"/><path d="M-8439.5 682.9 L344.1 -169.2" stroke="#585858" stroke-width="1.15" opacity="1"/><path d="M-2642.7 39.6 L-64513.8 11699.1" stroke="#585858" stroke-width="1.15" opacity="1"/><path d="M-9312.1 795.0 L359.7 -167.9" stroke="#585858" stroke-width="1.15" opacity="1"/><path d="M-2513.6 29.6 L-61541.6 11699.1" stroke="#585858" stroke-width="1.15" opacity="1"/><path d="M-10415.2 936.6 L375.6 -166.6" stroke="#585858" stroke-width="1.15" opacity="1"/><path d="M-2392.3 20.3 L-58569.4 11699.1" stroke="#585858" stroke-width="1.15" opacity="1"/><path d="M-11853.9 1121.3 L391.9 -165.2" stroke="#585858" stroke-width="1.15" opacity="1"/><path d="M-2278.2 11.5 L-55597.1 11699.0" stroke="#585858" stroke-width="1.15" opacity="1"/><path d="M-13809.2 1372.4 L408.6 -163.8" stroke="#585858" stroke-width="1.15" opacity="1"/><path d="M-2170.7 3.2 L-52625.0 11699.0" stroke="#585858" stroke-width="1.15" opacity="1"/><path d="M-16620.0 1733.3 L425.7 -162.4" stroke="#585858" stroke-width="1.15" opacity="1"/><path d="M-2069.2 -4.7 L-49652.8 11699.0" stroke="#585858" stroke-width="1.15" opacity="1"/><path d="M-21004.9 2296.3 L443.3 -161.0" stroke="#585858" stroke-width="1.15" opacity="1"/><path d="M-1973.3 -12.1 L-46680.6 11699.0" stroke="#585858" stroke-width="1.15" opacity="1"/><path d="M-28800.8 3297.3 L461.3 -159.5" stroke="#585858" stroke-width="1.15" opacity="1"/><path d="M-1882.4 -19.1 L-43708.4 11699.0" stroke="#585858" stroke-width="1.15" opacity="1"/><path d="M-46520.3 5572.5 L479.8 -157.9" stroke="#585858" stroke-width="1.15" opacity="1"/><path d="M-1796.2 -25.8 L-40736.2 11699.0" stroke="#585858" stroke-width="1.15" opacity="1"/><path d="M-93610.5 11698.4 L498.7 -156.4" stroke="#585858" stroke-width="1.15" opacity="1"/><path d="M-1714.3 -32.1 L-37764.1 11699.0" stroke="#585858" stroke-width="1.15" opacity="1"/><path d="M-90457.8 11698.4 L518.2 -154.8" stroke="#585858" stroke-width="1.15" opacity="1"/><path d="M-1636.5 -38.1 L-34791.9 11698.9" stroke="#585858" stroke-width="1.15" opacity="1"/><path d="M-87305.0 11698.4 L538.2 -153.1" stroke="#585858" stroke-width="1.15" opacity="1"/><path d="M-1562.3 -43.9 L-31819.8 11698.9" stroke="#585858" stroke-width="1.15" opacity="1"/><path d="M-84152.2 11698.4 L558.7 -151.4" stroke="#585858" stroke-width="1.15" opacity="1"/><path d="M-1491.7 -49.3 L-28847.6 11698.9" stroke="#585858" stroke-width="1.15" opacity="1"/><path d="M-80999.4 11698.4 L579.8 -149.6" stroke="#585858" stroke-width="1.15" opacity="1"/><path d="M-1424.3 -54.5 L-25875.5 11698.9" stroke="#585858" stroke-width="1.15" opacity="1"/><path d="M-77846.6 11698.4 L601.5 -147.9" stroke="#585858" stroke-width="1.15" opacity="1"/><path d="M-1359.8 -59.5 L-22903.4 11698.9" stroke="#585858" stroke-width="1.15" opacity="1"/><path d="M-74693.8 11698.5 L623.8 -146.0" stroke="#585858" stroke-width="1.15" opacity="1"/><path d="M-1298.2 -64.3 L-19931.3 11698.9" stroke="#585858" stroke-width="1.15" opacity="1"/><path d="M-71541.0 11698.5 L646.8 -144.1" stroke="#585858" stroke-width="1.15" opacity="1"/><path d="M-1239.3 -68.8 L-16959.2 11698.9" stroke="#585858" stroke-width="1.15" opacity="1"/><path d="M-68388.2 11698.5 L670.5 -142.1" stroke="#585858" stroke-width="1.15" opacity="1"/><path d="M-1182.8 -73.2 L-13987.1 11698.8" stroke="#585858" stroke-width="1.15" opacity="1"/><path d="M-65235.3 11698.5 L694.8 -140.1" stroke="#585858" stroke-width="1.15" opacity="1"/><path d="M-1128.6 -77.4 L-11015.0 11698.8" stroke="#585858" stroke-width="1.15" opacity="1"/><path d="M-62082.5 11698.5 L719.9 -138.0" stroke="#585858" stroke-width="1.15" opacity="1"/><path d="M-1076.6 -81.4 L-8042.9 11698.8" stroke="#585858" stroke-width="1.15" opacity="1"/><path d="M-58929.6 11698.5 L745.8 -135.9" stroke="#585858" stroke-width="1.15" opacity="1"/><path d="M-1026.7 -85.3 L-5070.8 11698.8" stroke="#585858" stroke-width="1.15" opacity="1"/><path d="M-55776.8 11698.5 L772.4 -133.7" stroke="#585858" stroke-width="1.15" opacity="1"/><path d="M-978.6 -89.0 L-2098.7 11698.8" stroke="#585858" stroke-width="1.15" opacity="1"/><path d="M-52623.9 11698.6 L800.0 -131.4" stroke="#585858" stroke-width="1.15" opacity="1"/><path d="M-932.4 -92.5 L873.3 11698.8" stroke="#585858" stroke-width="1.15" opacity="1"/><path d="M-49471.0 11698.6 L828.4 -129.0" stroke="#585858" stroke-width="1.15" opacity="1"/><path d="M-888.0 -96.0 L3845.4 11698.8" stroke="#585858" stroke-width="1.15" opacity="1"/><path d="M-46318.2 11698.6 L857.7 -126.6" stroke="#585858" stroke-width="1.15" opacity="1"/><path d="M-845.1 -99.3 L6817.4 11698.7" stroke="#585858" stroke-width="1.15" opacity="1"/><path d="M-43165.3 11698.6 L888.0 -124.1" stroke="#585858" stroke-width="1.15" opacity="1"/><path d="M-803.8 -102.5 L9789.5 11698.7" stroke="#585858" stroke-width="1.15" opacity="1"/><path d="M-40012.4 11698.6 L919.4 -121.5" stroke="#585858" stroke-width="1.15" opacity="1"/><path d="M-763.9 -105.6 L12761.5 11698.7" stroke="#585858" stroke-width="1.15" opacity="1"/><path d="M-36859.5 11698.6 L951.8 -118.8" stroke="#585858" stroke-width="1.15" opacity="1"/><path d="M-725.4 -108.5 L15733.5 11698.7" stroke="#585858" stroke-width="1.15" opacity="1"/><path d="M-33706.5 11698.7 L985.4 -116.0" stroke="#585858" stroke-width="1.15" opacity="1"/><path d="M-688.3 -111.4 L18705.6 11698.7" stroke="#585858" stroke-width="1.15" opacity="1"/><path d="M-30553.6 11698.7 L1020.1 -113.2" stroke="#585858" stroke-width="1.15" opacity="1"/><path d="M-652.3 -114.2 L21677.6 11698.7" stroke="#585858" stroke-width="1.15" opacity="1"/><path d="M-24247.8 11698.7 L1093.5 -107.1" stroke="#585858" stroke-width="1.15" opacity="1"/><path d="M-584.0 -119.5 L27621.6 11698.6" stroke="#585858" stroke-width="1.15" opacity="1"/><path d="M-21094.8 11698.7 L1132.3 -103.9" stroke="#585858" stroke-width="1.15" opacity="1"/><path d="M-551.4 -122.0 L30593.6 11698.6" stroke="#585858" stroke-width="1.15" opacity="1"/><path d="M-17941.8 11698.7 L1172.6 -100.5" stroke="#585858" stroke-width="1.15" opacity="1"/><path d="M-519.9 -124.4 L33565.6 11698.6" stroke="#585858" stroke-width="1.15" opacity="1"/><path d="M-14788.9 11698.7 L1214.4 -97.1" stroke="#585858" stroke-width="1.15" opacity="1"/><path d="M-489.3 -126.8 L36537.5 11698.6" stroke="#585858" stroke-width="1.15" opacity="1"/><path d="M-11635.9 11698.8 L1257.9 -93.4" stroke="#585858" stroke-width="1.15" opacity="1"/><path d="M-459.7 -129.1 L39509.5 11698.6" stroke="#585858" stroke-width="1.15" opacity="1"/><path d="M-8482.9 11698.8 L1303.2 -89.7" stroke="#585858" stroke-width="1.15" opacity="1"/><path d="M-431.0 -131.3 L42481.5 11698.6" stroke="#585858" stroke-width="1.15" opacity="1"/><path d="M-5329.9 11698.8 L1350.4 -85.8" stroke="#585858" stroke-width="1.15" opacity="1"/><path d="M-403.1 -133.4 L45453.4 11698.5" stroke="#585858" stroke-width="1.15" opacity="1"/><path d="M-2176.9 11698.8 L1399.6 -81.7" stroke="#585858" stroke-width="1.15" opacity="1"/><path d="M-376.0 -135.5 L48425.4 11698.5" stroke="#585858" stroke-width="1.15" opacity="1"/><path d="M976.1 11698.8 L1450.9 -77.4" stroke="#585858" stroke-width="1.15" opacity="1"/><path d="M-349.7 -137.6 L51397.3 11698.5" stroke="#585858" stroke-width="1.15" opacity="1"/><path d="M4129.1 11698.8 L1504.6 -73.0" stroke="#585858" stroke-width="1.15" opacity="1"/><path d="M-324.1 -139.5 L54369.2 11698.5" stroke="#585858" stroke-width="1.15" opacity="1"/><path d="M7282.1 11698.9 L1560.6 -68.4" stroke="#585858" stroke-width="1.15" opacity="1"/><path d="M-299.3 -141.5 L57341.2 11698.5" stroke="#585858" stroke-width="1.15" opacity="1"/><path d="M10435.1 11698.9 L1619.3 -63.5" stroke="#585858" stroke-width="1.15" opacity="1"/><path d="M-275.1 -143.3 L60313.1 11698.5" stroke="#585858" stroke-width="1.15" opacity="1"/><path d="M13588.2 11698.9 L1680.7 -58.4" stroke="#585858" stroke-width="1.15" opacity="1"/><path d="M-251.6 -145.1 L63285.0 11698.5" stroke="#585858" stroke-width="1.15" opacity="1"/><path d="M16741.2 11698.9 L1745.2 -53.1" stroke="#585858" stroke-width="1.15" opacity="1"/><path d="M-228.7 -146.9 L66256.9 11698.4" stroke="#585858" stroke-width="1.15" opacity="1"/><path d="M19894.3 11698.9 L1812.9 -47.4" stroke="#585858" stroke-width="1.15" opacity="1"/><path d="M-206.5 -148.6 L69228.8 11698.4" stroke="#585858" stroke-width="1.15" opacity="1"/><path d="M23047.3 11698.9 L1884.0 -41.6" stroke="#585858" stroke-width="1.15" opacity="1"/><path d="M-184.8 -150.3 L72200.7 11698.4" stroke="#585858" stroke-width="1.15" opacity="1"/><path d="M26200.4 11699.0 L1958.9 -35.3" stroke="#585858" stroke-width="1.15" opacity="1"/><path d="M-163.6 -151.9 L75172.6 11698.4" stroke="#585858" stroke-width="1.15" opacity="1"/><path d="M29353.5 11699.0 L2037.9 -28.8" stroke="#585858" stroke-width="1.15" opacity="1"/><path d="M-143.0 -153.5 L78144.4 11698.4" stroke="#585858" stroke-width="1.15" opacity="1"/><path d="M32506.6 11699.0 L2121.2 -21.9" stroke="#585858" stroke-width="1.15" opacity="1"/><path d="M-122.9 -155.1 L81116.3 11698.4" stroke="#585858" stroke-width="1.15" opacity="1"/><path d="M35659.7 11699.0 L2209.3 -14.6" stroke="#585858" stroke-width="1.15" opacity="1"/><path d="M-103.3 -156.6 L84088.2 11698.4" stroke="#585858" stroke-width="1.15" opacity="1"/><path d="M38812.8 11699.0 L2302.6 -6.9" stroke="#585858" stroke-width="1.15" opacity="1"/><path d="M-84.2 -158.1 L87060.0 11698.3" stroke="#585858" stroke-width="1.15" opacity="1"/><path d="M41965.9 11699.0 L2401.6 1.3" stroke="#585858" stroke-width="1.15" opacity="1"/><path d="M-65.6 -159.5 L90031.9 11698.3" stroke="#585858" stroke-width="1.15" opacity="1"/><path d="M45119.0 11699.0 L2506.7 10.1" stroke="#585858" stroke-width="1.15" opacity="1"/><path d="M-47.4 -160.9 L93003.7 11698.3" stroke="#585858" stroke-width="1.15" opacity="1"/><path d="M48272.1 11699.1 L2618.6 19.3" stroke="#585858" stroke-width="1.15" opacity="1"/><path d="M-29.6 -162.3 L95975.5 11698.3" stroke="#585858" stroke-width="1.15" opacity="1"/><path d="M51425.3 11699.1 L2738.0 29.2" stroke="#585858" stroke-width="1.15" opacity="1"/><path d="M-12.3 -163.6 L90192.4 10648.9" stroke="#585858" stroke-width="1.15" opacity="1"/><path d="M54578.4 11699.1 L2865.6 39.8" stroke="#585858" stroke-width="1.15" opacity="1"/><path d="M4.7 -165.0 L43302.9 4875.1" stroke="#585858" stroke-width="1.15" opacity="1"/><path d="M57731.6 11699.1 L3002.4 51.1" stroke="#585858" stroke-width="1.15" opacity="1"/><path d="M21.3 -166.2 L28836.0 3093.7" stroke="#585858" stroke-width="1.15" opacity="1"/><path d="M60884.7 11699.1 L3149.3 63.3" stroke="#585858" stroke-width="1.15" opacity="1"/><path d="M37.5 -167.5 L21802.6 2227.7" stroke="#585858" stroke-width="1.15" opacity="1"/><path d="M64037.9 11699.1 L3307.5 76.4" stroke="#585858" stroke-width="1.15" opacity="1"/><path d="M53.3 -168.7 L17644.4 1715.7" stroke="#585858" stroke-width="1.15" opacity="1"/><path d="M67191.1 11699.2 L3478.3 90.6" stroke="#585858" stroke-width="1.15" opacity="1"/><path d="M68.8 -169.9 L14897.5 1377.4" stroke="#585858" stroke-width="1.15" opacity="1"/><path d="M70344.3 11699.2 L3663.4 105.9" stroke="#585858" stroke-width="1.15" opacity="1"/><path d="M83.9 -171.1 L12947.8 1137.3" stroke="#585858" stroke-width="1.15" opacity="1"/><path d="M73497.5 11699.2 L3864.7 122.6" stroke="#585858" stroke-width="1.15" opacity="1"/><path d="M98.8 -172.2 L11492.1 958.1" stroke="#585858" stroke-width="1.15" opacity="1"/><path d="M76650.7 11699.2 L4084.2 140.8" stroke="#585858" stroke-width="1.15" opacity="1"/><path d="M113.3 -173.3 L10363.8 819.2" stroke="#585858" stroke-width="1.15" opacity="1"/><path d="M79803.9 11699.2 L4324.7 160.7" stroke="#585858" stroke-width="1.15" opacity="1"/><path d="M127.5 -174.4 L9463.7 708.3" stroke="#585858" stroke-width="1.15" opacity="1"/><path d="M82957.1 11699.2 L4589.2 182.7" stroke="#585858" stroke-width="1.15" opacity="1"/><path d="M141.4 -175.5 L8728.8 617.8" stroke="#585858" stroke-width="1.15" opacity="1"/><path d="M86110.3 11699.2 L4881.6 206.9" stroke="#585858" stroke-width="1.15" opacity="1"/><path d="M155.0 -176.6 L8117.5 542.6" stroke="#585858" stroke-width="1.15" opacity="1"/><path d="M89263.5 11699.3 L5206.5 233.8" stroke="#585858" stroke-width="1.15" opacity="1"/><path d="M168.3 -177.6 L7601.0 479.0" stroke="#585858" stroke-width="1.15" opacity="1"/><path d="M92416.8 11699.3 L5569.7 263.9" stroke="#585858" stroke-width="1.15" opacity="1"/><path d="M181.4 -178.6 L7158.9 424.5" stroke="#585858" stroke-width="1.15" opacity="1"/><path d="M95570.0 11699.3 L5978.4 297.8" stroke="#585858" stroke-width="1.15" opacity="1"/><path d="M194.2 -179.6 L6776.2 377.4" stroke="#585858" stroke-width="1.15" opacity="1"/><path d="M98723.3 11699.3 L6441.6 336.2" stroke="#585858" stroke-width="1.15" opacity="1"/><path d="M206.8 -180.6 L6441.6 336.2" stroke="#585858" stroke-width="1.15" opacity="1"/><path d="M-617.6 -116.9 L24649.6 11698.7" stroke="#b4485c" stroke-width="1.3" opacity="1"/><path d="M-27400.7 11698.7 L1056.2 -110.2" stroke="#7fa03a" stroke-width="1.3" opacity="1"/><linearGradient id="gt" gradientUnits="userSpaceOnUse" x1="36" y1="163" x2="319" y2="166"><stop offset="0" stop-color="#c3c3c7"/><stop offset="1" stop-color="#b1b1ba"/></linearGradient><linearGradient id="gl" gradientUnits="userSpaceOnUse" x1="36" y1="163" x2="173" y2="412"><stop offset="0" stop-color="#cdcdca"/><stop offset="1" stop-color="#c4c4c4"/></linearGradient><linearGradient id="gr" gradientUnits="userSpaceOnUse" x1="172" y1="224" x2="308" y2="340"><stop offset="0" stop-color="#9696a4"/><stop offset="1" stop-color="#8e8e9c"/></linearGradient><polygon points="36.0,163.3 180.7,118.5 318.8,166.4 172.1,223.5" fill="url(#gt)" stroke="#b9b9c0" stroke-width=".6"/><polygon points="36.0,163.3 172.1,223.5 172.6,412.2 46.8,335.7" fill="url(#gl)" stroke="#c9c9c9" stroke-width=".6"/><polygon points="172.1,223.5 318.8,166.4 308.0,339.6 172.6,412.2" fill="url(#gr)" stroke="#9393a1" stroke-width=".6"/><path d="M41.6 252.9 L172.3 322.1" stroke="#fff" stroke-width="1" opacity="0.1"/><path d="M172.3 322.1 L313.2 256.5" stroke="#fff" stroke-width="1" opacity="0.1"/><clipPath id="lowc"><polygon points="41.6,252.9 172.3,322.1 313.2,256.5 308.0,339.6 172.6,412.2 46.8,335.7"/></clipPath><g clip-path="url(#lowc)"><path d="M-4618.2 192.3 L206.8 -180.6" stroke="#fff" stroke-width="1" opacity="0.12"/><path d="M-4618.2 192.3 L-94236.4 11699.2" stroke="#fff" stroke-width="1" opacity="0.12"/><path d="M-4815.2 217.6 L219.2 -179.5" stroke="#fff" stroke-width="1" opacity="0.12"/><path d="M-4339.0 170.7 L-91264.1 11699.2" stroke="#fff" stroke-width="1" opacity="0.12"/><path d="M-5034.5 245.7 L231.9 -178.5" stroke="#fff" stroke-width="1" opacity="0.12"/><path d="M-4084.2 151.0 L-88291.8 11699.2" stroke="#fff" stroke-width="1" opacity="0.12"/><path d="M-5280.3 277.3 L244.8 -177.4" stroke="#fff" stroke-width="1" opacity="0.12"/><path d="M-3851.0 133.0 L-85319.5 11699.2" stroke="#fff" stroke-width="1" opacity="0.12"/><path d="M-5557.8 312.9 L258.1 -176.3" stroke="#fff" stroke-width="1" opacity="0.12"/><path d="M-3636.5 116.4 L-82347.2 11699.2" stroke="#fff" stroke-width="1" opacity="0.12"/><path d="M-5873.2 353.4 L271.6 -175.2" stroke="#fff" stroke-width="1" opacity="0.12"/><path d="M-3438.7 101.1 L-79375.0 11699.2" stroke="#fff" stroke-width="1" opacity="0.12"/><path d="M-6235.2 399.9 L285.5 -174.0" stroke="#fff" stroke-width="1" opacity="0.12"/><path d="M-3255.7 87.0 L-76402.7 11699.2" stroke="#fff" stroke-width="1" opacity="0.12"/><path d="M-6654.8 453.8 L299.7 -172.9" stroke="#fff" stroke-width="1" opacity="0.12"/><path d="M-3085.9 73.9 L-73430.5 11699.1" stroke="#fff" stroke-width="1" opacity="0.12"/><path d="M-7146.9 517.0 L314.1 -171.7" stroke="#fff" stroke-width="1" opacity="0.12"/><path d="M-2927.9 61.7 L-70458.2 11699.1" stroke="#fff" stroke-width="1" opacity="0.12"/><path d="M-7732.1 592.1 L329.0 -170.4" stroke="#fff" stroke-width="1" opacity="0.12"/><path d="M-2780.5 50.3 L-67486.0 11699.1" stroke="#fff" stroke-width="1" opacity="0.12"/><path d="M-8439.5 682.9 L344.1 -169.2" stroke="#fff" stroke-width="1" opacity="0.12"/><path d="M-2642.7 39.6 L-64513.8 11699.1" stroke="#fff" stroke-width="1" opacity="0.12"/><path d="M-9312.1 795.0 L359.7 -167.9" stroke="#fff" stroke-width="1" opacity="0.12"/><path d="M-2513.6 29.6 L-61541.6 11699.1" stroke="#fff" stroke-width="1" opacity="0.12"/><path d="M-10415.2 936.6 L375.6 -166.6" stroke="#fff" stroke-width="1" opacity="0.12"/><path d="M-2392.3 20.3 L-58569.4 11699.1" stroke="#fff" stroke-width="1" opacity="0.12"/><path d="M-11853.9 1121.3 L391.9 -165.2" stroke="#fff" stroke-width="1" opacity="0.12"/><path d="M-2278.2 11.5 L-55597.1 11699.0" stroke="#fff" stroke-width="1" opacity="0.12"/><path d="M-13809.2 1372.4 L408.6 -163.8" stroke="#fff" stroke-width="1" opacity="0.12"/><path d="M-2170.7 3.2 L-52625.0 11699.0" stroke="#fff" stroke-width="1" opacity="0.12"/><path d="M-16620.0 1733.3 L425.7 -162.4" stroke="#fff" stroke-width="1" opacity="0.12"/><path d="M-2069.2 -4.7 L-49652.8 11699.0" stroke="#fff" stroke-width="1" opacity="0.12"/><path d="M-21004.9 2296.3 L443.3 -161.0" stroke="#fff" stroke-width="1" opacity="0.12"/><path d="M-1973.3 -12.1 L-46680.6 11699.0" stroke="#fff" stroke-width="1" opacity="0.12"/><path d="M-28800.8 3297.3 L461.3 -159.5" stroke="#fff" stroke-width="1" opacity="0.12"/><path d="M-1882.4 -19.1 L-43708.4 11699.0" stroke="#fff" stroke-width="1" opacity="0.12"/><path d="M-46520.3 5572.5 L479.8 -157.9" stroke="#fff" stroke-width="1" opacity="0.12"/><path d="M-1796.2 -25.8 L-40736.2 11699.0" stroke="#fff" stroke-width="1" opacity="0.12"/><path d="M-93610.5 11698.4 L498.7 -156.4" stroke="#fff" stroke-width="1" opacity="0.12"/><path d="M-1714.3 -32.1 L-37764.1 11699.0" stroke="#fff" stroke-width="1" opacity="0.12"/><path d="M-90457.8 11698.4 L518.2 -154.8" stroke="#fff" stroke-width="1" opacity="0.12"/><path d="M-1636.5 -38.1 L-34791.9 11698.9" stroke="#fff" stroke-width="1" opacity="0.12"/><path d="M-87305.0 11698.4 L538.2 -153.1" stroke="#fff" stroke-width="1" opacity="0.12"/><path d="M-1562.3 -43.9 L-31819.8 11698.9" stroke="#fff" stroke-width="1" opacity="0.12"/><path d="M-84152.2 11698.4 L558.7 -151.4" stroke="#fff" stroke-width="1" opacity="0.12"/><path d="M-1491.7 -49.3 L-28847.6 11698.9" stroke="#fff" stroke-width="1" opacity="0.12"/><path d="M-80999.4 11698.4 L579.8 -149.6" stroke="#fff" stroke-width="1" opacity="0.12"/><path d="M-1424.3 -54.5 L-25875.5 11698.9" stroke="#fff" stroke-width="1" opacity="0.12"/><path d="M-77846.6 11698.4 L601.5 -147.9" stroke="#fff" stroke-width="1" opacity="0.12"/><path d="M-1359.8 -59.5 L-22903.4 11698.9" stroke="#fff" stroke-width="1" opacity="0.12"/><path d="M-74693.8 11698.5 L623.8 -146.0" stroke="#fff" stroke-width="1" opacity="0.12"/><path d="M-1298.2 -64.3 L-19931.3 11698.9" stroke="#fff" stroke-width="1" opacity="0.12"/><path d="M-71541.0 11698.5 L646.8 -144.1" stroke="#fff" stroke-width="1" opacity="0.12"/><path d="M-1239.3 -68.8 L-16959.2 11698.9" stroke="#fff" stroke-width="1" opacity="0.12"/><path d="M-68388.2 11698.5 L670.5 -142.1" stroke="#fff" stroke-width="1" opacity="0.12"/><path d="M-1182.8 -73.2 L-13987.1 11698.8" stroke="#fff" stroke-width="1" opacity="0.12"/><path d="M-65235.3 11698.5 L694.8 -140.1" stroke="#fff" stroke-width="1" opacity="0.12"/><path d="M-1128.6 -77.4 L-11015.0 11698.8" stroke="#fff" stroke-width="1" opacity="0.12"/><path d="M-62082.5 11698.5 L719.9 -138.0" stroke="#fff" stroke-width="1" opacity="0.12"/><path d="M-1076.6 -81.4 L-8042.9 11698.8" stroke="#fff" stroke-width="1" opacity="0.12"/><path d="M-58929.6 11698.5 L745.8 -135.9" stroke="#fff" stroke-width="1" opacity="0.12"/><path d="M-1026.7 -85.3 L-5070.8 11698.8" stroke="#fff" stroke-width="1" opacity="0.12"/><path d="M-55776.8 11698.5 L772.4 -133.7" stroke="#fff" stroke-width="1" opacity="0.12"/><path d="M-978.6 -89.0 L-2098.7 11698.8" stroke="#fff" stroke-width="1" opacity="0.12"/><path d="M-52623.9 11698.6 L800.0 -131.4" stroke="#fff" stroke-width="1" opacity="0.12"/><path d="M-932.4 -92.5 L873.3 11698.8" stroke="#fff" stroke-width="1" opacity="0.12"/><path d="M-49471.0 11698.6 L828.4 -129.0" stroke="#fff" stroke-width="1" opacity="0.12"/><path d="M-888.0 -96.0 L3845.4 11698.8" stroke="#fff" stroke-width="1" opacity="0.12"/><path d="M-46318.2 11698.6 L857.7 -126.6" stroke="#fff" stroke-width="1" opacity="0.12"/><path d="M-845.1 -99.3 L6817.4 11698.7" stroke="#fff" stroke-width="1" opacity="0.12"/><path d="M-43165.3 11698.6 L888.0 -124.1" stroke="#fff" stroke-width="1" opacity="0.12"/><path d="M-803.8 -102.5 L9789.5 11698.7" stroke="#fff" stroke-width="1" opacity="0.12"/><path d="M-40012.4 11698.6 L919.4 -121.5" stroke="#fff" stroke-width="1" opacity="0.12"/><path d="M-763.9 -105.6 L12761.5 11698.7" stroke="#fff" stroke-width="1" opacity="0.12"/><path d="M-36859.5 11698.6 L951.8 -118.8" stroke="#fff" stroke-width="1" opacity="0.12"/><path d="M-725.4 -108.5 L15733.5 11698.7" stroke="#fff" stroke-width="1" opacity="0.12"/><path d="M-33706.5 11698.7 L985.4 -116.0" stroke="#fff" stroke-width="1" opacity="0.12"/><path d="M-688.3 -111.4 L18705.6 11698.7" stroke="#fff" stroke-width="1" opacity="0.12"/><path d="M-30555.2 11699.3 L41.6 252.9" stroke="#fff" stroke-width="1" opacity="0.12"/><path d="M172.3 322.1 L21678.8 11699.3" stroke="#fff" stroke-width="1" opacity="0.12"/><path d="M-24249.0 11699.3 L172.3 322.1" stroke="#fff" stroke-width="1" opacity="0.12"/><path d="M313.2 256.5 L27623.1 11699.3" stroke="#fff" stroke-width="1" opacity="0.12"/><path d="M-21094.8 11698.7 L1132.3 -103.9" stroke="#fff" stroke-width="1" opacity="0.12"/><path d="M-551.4 -122.0 L30593.6 11698.6" stroke="#fff" stroke-width="1" opacity="0.12"/><path d="M-17941.8 11698.7 L1172.6 -100.5" stroke="#fff" stroke-width="1" opacity="0.12"/><path d="M-519.9 -124.4 L33565.6 11698.6" stroke="#fff" stroke-width="1" opacity="0.12"/><path d="M-14788.9 11698.7 L1214.4 -97.1" stroke="#fff" stroke-width="1" opacity="0.12"/><path d="M-489.3 -126.8 L36537.5 11698.6" stroke="#fff" stroke-width="1" opacity="0.12"/><path d="M-11635.9 11698.8 L1257.9 -93.4" stroke="#fff" stroke-width="1" opacity="0.12"/><path d="M-459.7 -129.1 L39509.5 11698.6" stroke="#fff" stroke-width="1" opacity="0.12"/><path d="M-8482.9 11698.8 L1303.2 -89.7" stroke="#fff" stroke-width="1" opacity="0.12"/><path d="M-431.0 -131.3 L42481.5 11698.6" stroke="#fff" stroke-width="1" opacity="0.12"/><path d="M-5329.9 11698.8 L1350.4 -85.8" stroke="#fff" stroke-width="1" opacity="0.12"/><path d="M-403.1 -133.4 L45453.4 11698.5" stroke="#fff" stroke-width="1" opacity="0.12"/><path d="M-2176.9 11698.8 L1399.6 -81.7" stroke="#fff" stroke-width="1" opacity="0.12"/><path d="M-376.0 -135.5 L48425.4 11698.5" stroke="#fff" stroke-width="1" opacity="0.12"/><path d="M976.1 11698.8 L1450.9 -77.4" stroke="#fff" stroke-width="1" opacity="0.12"/><path d="M-349.7 -137.6 L51397.3 11698.5" stroke="#fff" stroke-width="1" opacity="0.12"/><path d="M4129.1 11698.8 L1504.6 -73.0" stroke="#fff" stroke-width="1" opacity="0.12"/><path d="M-324.1 -139.5 L54369.2 11698.5" stroke="#fff" stroke-width="1" opacity="0.12"/><path d="M7282.1 11698.9 L1560.6 -68.4" stroke="#fff" stroke-width="1" opacity="0.12"/><path d="M-299.3 -141.5 L57341.2 11698.5" stroke="#fff" stroke-width="1" opacity="0.12"/><path d="M10435.1 11698.9 L1619.3 -63.5" stroke="#fff" stroke-width="1" opacity="0.12"/><path d="M-275.1 -143.3 L60313.1 11698.5" stroke="#fff" stroke-width="1" opacity="0.12"/><path d="M13588.2 11698.9 L1680.7 -58.4" stroke="#fff" stroke-width="1" opacity="0.12"/><path d="M-251.6 -145.1 L63285.0 11698.5" stroke="#fff" stroke-width="1" opacity="0.12"/><path d="M16741.2 11698.9 L1745.2 -53.1" stroke="#fff" stroke-width="1" opacity="0.12"/><path d="M-228.7 -146.9 L66256.9 11698.4" stroke="#fff" stroke-width="1" opacity="0.12"/><path d="M19894.3 11698.9 L1812.9 -47.4" stroke="#fff" stroke-width="1" opacity="0.12"/><path d="M-206.5 -148.6 L69228.8 11698.4" stroke="#fff" stroke-width="1" opacity="0.12"/><path d="M23047.3 11698.9 L1884.0 -41.6" stroke="#fff" stroke-width="1" opacity="0.12"/><path d="M-184.8 -150.3 L72200.7 11698.4" stroke="#fff" stroke-width="1" opacity="0.12"/><path d="M26200.4 11699.0 L1958.9 -35.3" stroke="#fff" stroke-width="1" opacity="0.12"/><path d="M-163.6 -151.9 L75172.6 11698.4" stroke="#fff" stroke-width="1" opacity="0.12"/><path d="M29353.5 11699.0 L2037.9 -28.8" stroke="#fff" stroke-width="1" opacity="0.12"/><path d="M-143.0 -153.5 L78144.4 11698.4" stroke="#fff" stroke-width="1" opacity="0.12"/><path d="M32506.6 11699.0 L2121.2 -21.9" stroke="#fff" stroke-width="1" opacity="0.12"/><path d="M-122.9 -155.1 L81116.3 11698.4" stroke="#fff" stroke-width="1" opacity="0.12"/><path d="M35659.7 11699.0 L2209.3 -14.6" stroke="#fff" stroke-width="1" opacity="0.12"/><path d="M-103.3 -156.6 L84088.2 11698.4" stroke="#fff" stroke-width="1" opacity="0.12"/><path d="M38812.8 11699.0 L2302.6 -6.9" stroke="#fff" stroke-width="1" opacity="0.12"/><path d="M-84.2 -158.1 L87060.0 11698.3" stroke="#fff" stroke-width="1" opacity="0.12"/><path d="M41965.9 11699.0 L2401.6 1.3" stroke="#fff" stroke-width="1" opacity="0.12"/><path d="M-65.6 -159.5 L90031.9 11698.3" stroke="#fff" stroke-width="1" opacity="0.12"/><path d="M45119.0 11699.0 L2506.7 10.1" stroke="#fff" stroke-width="1" opacity="0.12"/><path d="M-47.4 -160.9 L93003.7 11698.3" stroke="#fff" stroke-width="1" opacity="0.12"/><path d="M48272.1 11699.1 L2618.6 19.3" stroke="#fff" stroke-width="1" opacity="0.12"/><path d="M-29.6 -162.3 L95975.5 11698.3" stroke="#fff" stroke-width="1" opacity="0.12"/><path d="M51425.3 11699.1 L2738.0 29.2" stroke="#fff" stroke-width="1" opacity="0.12"/><path d="M-12.3 -163.6 L90192.4 10648.9" stroke="#fff" stroke-width="1" opacity="0.12"/><path d="M54578.4 11699.1 L2865.6 39.8" stroke="#fff" stroke-width="1" opacity="0.12"/><path d="M4.7 -165.0 L43302.9 4875.1" stroke="#fff" stroke-width="1" opacity="0.12"/><path d="M57731.6 11699.1 L3002.4 51.1" stroke="#fff" stroke-width="1" opacity="0.12"/><path d="M21.3 -166.2 L28836.0 3093.7" stroke="#fff" stroke-width="1" opacity="0.12"/><path d="M60884.7 11699.1 L3149.3 63.3" stroke="#fff" stroke-width="1" opacity="0.12"/><path d="M37.5 -167.5 L21802.6 2227.7" stroke="#fff" stroke-width="1" opacity="0.12"/><path d="M64037.9 11699.1 L3307.5 76.4" stroke="#fff" stroke-width="1" opacity="0.12"/><path d="M53.3 -168.7 L17644.4 1715.7" stroke="#fff" stroke-width="1" opacity="0.12"/><path d="M67191.1 11699.2 L3478.3 90.6" stroke="#fff" stroke-width="1" opacity="0.12"/><path d="M68.8 -169.9 L14897.5 1377.4" stroke="#fff" stroke-width="1" opacity="0.12"/><path d="M70344.3 11699.2 L3663.4 105.9" stroke="#fff" stroke-width="1" opacity="0.12"/><path d="M83.9 -171.1 L12947.8 1137.3" stroke="#fff" stroke-width="1" opacity="0.12"/><path d="M73497.5 11699.2 L3864.7 122.6" stroke="#fff" stroke-width="1" opacity="0.12"/><path d="M98.8 -172.2 L11492.1 958.1" stroke="#fff" stroke-width="1" opacity="0.12"/><path d="M76650.7 11699.2 L4084.2 140.8" stroke="#fff" stroke-width="1" opacity="0.12"/><path d="M113.3 -173.3 L10363.8 819.2" stroke="#fff" stroke-width="1" opacity="0.12"/><path d="M79803.9 11699.2 L4324.7 160.7" stroke="#fff" stroke-width="1" opacity="0.12"/><path d="M127.5 -174.4 L9463.7 708.3" stroke="#fff" stroke-width="1" opacity="0.12"/><path d="M82957.1 11699.2 L4589.2 182.7" stroke="#fff" stroke-width="1" opacity="0.12"/><path d="M141.4 -175.5 L8728.8 617.8" stroke="#fff" stroke-width="1" opacity="0.12"/><path d="M86110.3 11699.2 L4881.6 206.9" stroke="#fff" stroke-width="1" opacity="0.12"/><path d="M155.0 -176.6 L8117.5 542.6" stroke="#fff" stroke-width="1" opacity="0.12"/><path d="M89263.5 11699.3 L5206.5 233.8" stroke="#fff" stroke-width="1" opacity="0.12"/><path d="M168.3 -177.6 L7601.0 479.0" stroke="#fff" stroke-width="1" opacity="0.12"/><path d="M92416.8 11699.3 L5569.7 263.9" stroke="#fff" stroke-width="1" opacity="0.12"/><path d="M181.4 -178.6 L7158.9 424.5" stroke="#fff" stroke-width="1" opacity="0.12"/><path d="M95570.0 11699.3 L5978.4 297.8" stroke="#fff" stroke-width="1" opacity="0.12"/><path d="M194.2 -179.6 L6776.2 377.4" stroke="#fff" stroke-width="1" opacity="0.12"/><path d="M98723.3 11699.3 L6441.6 336.2" stroke="#fff" stroke-width="1" opacity="0.12"/><path d="M206.8 -180.6 L6441.6 336.2" stroke="#fff" stroke-width="1" opacity="0.12"/><path d="M246.9 287.4 L24651.0 11699.3" stroke="#c2586a" stroke-width="1.3" opacity="1"/><path d="M-27402.1 11699.3 L103.0 285.4" stroke="#8fb43a" stroke-width="1.3" opacity="1"/></g><circle cx="176.5" cy="254.39999999999998" r="10" fill="none" stroke="#fff" stroke-width="1.3"/><circle cx="176.5" cy="254.39999999999998" r="10" fill="none" stroke="#e62020" stroke-width="1.3" stroke-dasharray="3.93 3.93" stroke-dashoffset="2"/><path d="M176.5 236.2 V249.59999999999997 M176.5 259.4 V272.0" stroke="#333" stroke-width="1.6"/><path d="M163.2 247.39999999999998 L172.9 252.39999999999998 M162.1 260.59999999999997 L172.6 255.99999999999997 M191.9 247.99999999999997 L181.3 252.59999999999997 M190.7 260.59999999999997 L180.3 255.39999999999998" stroke="#111" stroke-width="1.1"/></svg>
<div style="left:0px;top:0px;width:365px;height:90px;background:rgba(0,0,0,.5)"></div>
<div style="left:0px;top:430px;width:365px;height:74px;background:rgba(0,0,0,.5)"></div>
<div style="left:0px;top:90px;width:365px;height:2px;background:#000"></div>
<div style="left:0px;top:90px;width:365px;height:1px;background:repeating-linear-gradient(90deg,#000 0 1px,#4a4a4a 1px 4px,#000 4px 6px)"></div>
<div style="left:0px;top:92px;width:365px;height:1px;background:#8c8c46"></div>
<div style="left:0px;top:427px;width:365px;height:1px;background:#7f7f48"></div>
<div style="left:0px;top:428px;width:365px;height:2px;background:#000"></div>
<div style="left:0px;top:429px;width:365px;height:1px;background:repeating-linear-gradient(90deg,#000 0 1px,#4a4a4a 1px 4px,#000 4px 6px)"></div>
<div style="left:8px;top:4px;width:32px;height:20px;background:rgba(43,43,43,.9);border-radius:4px;border:1px solid rgba(75,75,75,.5);"></div>
<svg style="left:11px;top:6px;" width="16" height="16" viewBox="0 0 16 16"><path d="M1 7.4 H10 M.6 11.6 H15 M5.6 5.4 L3.4 15 M11.6 9.4 L12.6 15" fill="none" stroke="#e0e0e0" stroke-width="1.1"/><circle cx="10.6" cy="4.4" r="3.3" fill="#e0e0e0"/><path d="M8.6 3.6 A2.2 2.2 0 0 1 10 2.4" fill="none" stroke="#444" stroke-width=".8"/></svg>
<svg style="left:29px;top:12px" width="10" height="7" viewBox="0 0 10 7"><path d="M2 1.7 L5 4.7 L8 1.7" fill="none" stroke="#c2c2c2" stroke-width="1.6" stroke-linecap="round" stroke-linejoin="round"/></svg>
<div style="left:46px;top:4px;width:110px;height:20px;background:rgba(43,43,43,.9);border-radius:4px;border:1px solid rgba(75,75,75,.5);"></div>
<svg style="left:50px;top:6px;" width="16" height="16" viewBox="0 0 16 16"><rect x="4.2" y="4.2" width="7.6" height="7.6" rx=".6" fill="#e0e0e0"/><path d="M1 4.5 V1 H4.5 M11.5 1 H15 V4.5 M15 11.5 V15 H11.5 M4.5 15 H1 V11.5" fill="none" stroke="#e0e0e0" stroke-width="1.1"/></svg>
<div class="m" style="left:72px;top:8px;">Object Mode</div>
<svg style="left:144px;top:12px" width="10" height="7" viewBox="0 0 10 7"><path d="M2 1.7 L5 4.7 L8 1.7" fill="none" stroke="#c2c2c2" stroke-width="1.6" stroke-linecap="round" stroke-linejoin="round"/></svg>
<div style="left:162px;top:4px;width:38px;height:20px;background:rgba(43,43,43,.9);border-radius:4px;border:1px solid rgba(75,75,75,.5);text-align:center;line-height:19px;color:#e0e0e0">View</div>
<div style="left:202px;top:4px;width:44px;height:20px;background:rgba(43,43,43,.9);border-radius:4px;border:1px solid rgba(75,75,75,.5);text-align:center;line-height:19px;color:#e0e0e0">Select</div>
<div style="left:248px;top:4px;width:32px;height:20px;background:rgba(43,43,43,.9);border-radius:4px;border:1px solid rgba(75,75,75,.5);text-align:center;line-height:19px;color:#e0e0e0">Add</div>
<div style="left:282px;top:4px;width:46px;height:20px;background:rgba(43,43,43,.9);border-radius:4px;border:1px solid rgba(75,75,75,.5);text-align:center;line-height:19px;color:#e0e0e0">Object</div>
<div style="left:345px;top:4px;width:30px;height:20px;background:rgba(43,43,43,.9);border-radius:4px;border:1px solid rgba(75,75,75,.5);"></div>
<svg style="left:348px;top:6px;" width="16" height="16" viewBox="0 0 16 16"><circle cx="5.4" cy="10.6" r="1.6" fill="#e0e0e0"/><path d="M5.4 8 V1.6 M3.6 3.4 L5.4 1.4 L7.2 3.4 M8 10.6 H14.6 M12.8 8.8 L14.8 10.6 L12.8 12.4 M3.8 12.2 L1.2 14.8" fill="none" stroke="#e0e0e0" stroke-width="1.1" stroke-linecap="round" stroke-linejoin="round"/></svg>
<div class="t" style="left:19px;top:37px;color:#fff">Camera Perspective</div>
<div class="t" style="left:19px;top:57px;color:#fff">(1) Collection | Camera</div>
<svg style="left:195px;top:41px;" width="19" height="19" viewBox="0 0 16 16"><circle cx="4.4" cy="4.6" r="3.1" fill="#cdcdcd"/><circle cx="10.6" cy="4.2" r="3.7" fill="#cdcdcd"/><rect x="3.4" y="8.6" width="9" height="5.6" rx="1" fill="#cdcdcd"/><path d="M12.2 10.2 L15.4 9 V13.8 L12.2 12.6Z" fill="#cdcdcd"/><rect x="1" y="10" width="2.6" height="1.6" fill="#cdcdcd"/><circle cx="4.4" cy="4.6" r="1.2" fill="#444"/><circle cx="10.6" cy="4.2" r="1.5" fill="#444"/></svg>
<svg style="left:226px;top:41.5px;" width="17.5" height="17.5" viewBox="0 0 16 16"><path d="M.8 8.4 Q1.6 7.4 2.8 8.4 L4.6 10.2 L5.2 2.4 Q5.4 1.4 6.2 1.5 Q7 1.6 7 2.6 L7.2 7.6 H7.9 L8 1.4 Q8.1 .4 8.9 .4 Q9.8 .4 9.8 1.4 L9.9 7.6 H10.6 L11.2 2.2 Q11.4 1.3 12.2 1.4 Q13 1.6 12.9 2.5 L12.5 8.2 H13.1 L14 4.6 Q14.3 3.8 15 4 Q15.7 4.3 15.5 5.1 L14.2 11 Q13 15.4 8.8 15.4 Q5.6 15.4 3.8 12.6Z" fill="#cdcdcd"/></svg>
<svg style="left:255.39999999999998px;top:41.60000000000002px;" width="17.8" height="17.8" viewBox="0 0 16 16"><path d="M6.6 9.6 L1.8 14.4" stroke="#cdcdcd" stroke-width="2" stroke-linecap="round"/><circle cx="10" cy="6" r="5.6" fill="#cdcdcd"/><path d="M10 2.8 V9.2 M6.8 6 H13.2" stroke="#1c1c1c" stroke-width="1.2"/></svg>
<div style="left:0px;top:42px;width:7px;height:14px;background:rgba(0,0,0,.4);border-radius:0 4px 4px 0"></div>
<div style="left:357px;top:42px;width:8px;height:14px;background:rgba(0,0,0,.4);border-radius:4px 0 0 4px"></div>
<svg style="left:0px;top:44px;" width="7" height="10" viewBox="0 0 7 10"><path d="M1 1.5 L4.6 5 L1 8.5" fill="none" stroke="#8e8e8e" stroke-width="1.1"/></svg>
<svg style="left:357px;top:44px;" width="7" height="10" viewBox="0 0 7 10"><path d="M5.5 1.5 L2 5 L5.5 8.5" fill="none" stroke="#8e8e8e" stroke-width="1.1"/></svg>
</div>
<div style="left:0px;top:1059px;width:960px;height:19px;background:#303030"></div>
<svg style="left:10px;top:1061px;" width="16" height="16" viewBox="0 0 16 16"><rect x="2.6" y=".8" width="10.4" height="14.4" rx="4" fill="none" stroke="#cfcfcf" stroke-width="1.2"/><path d="M2.6 7.6 V4.8 A4 4 0 0 1 6.6 .8 H7.6 V7.6Z" fill="#cfcfcf"/></svg>
<div class="t" style="left:35px;top:1063px;color:#bdbdbd;text-shadow:none">Scroller Activate</div>
<svg style="left:128px;top:1061px;" width="16" height="16" viewBox="0 0 16 16"><rect x="1" y=".8" width="10.4" height="14.4" rx="4" fill="none" stroke="#cfcfcf" stroke-width="1.2"/><path d="M1 7.6 V4.8 A4 4 0 0 1 5 .8 H6 V7.6Z" fill="#cfcfcf"/><path d="M13.2 1.6 Q14 4.6 13.2 7.6 M15.4 .8 Q16.4 4.6 15.4 8.4" fill="none" stroke="#cfcfcf" stroke-width="1"/></svg>
<div class="t" style="left:153px;top:1063px;color:#bdbdbd;text-shadow:none">Move</div>
<svg style="left:247px;top:1061px;" width="16" height="16" viewBox="0 0 16 16"><rect x="2.6" y=".8" width="10.4" height="14.4" rx="4" fill="none" stroke="#cfcfcf" stroke-width="1.2"/><rect x="6.6" y="3" width="2.4" height="5" rx="1.2" fill="#cfcfcf"/></svg>
<div class="t" style="left:271px;top:1063px;color:#bdbdbd;text-shadow:none">Scroller Activate</div>
<svg style="left:482px;top:1061px;" width="16" height="16" viewBox="0 0 16 16"><rect x="2.6" y=".8" width="10.4" height="14.4" rx="4" fill="none" stroke="#cfcfcf" stroke-width="1.2"/><path d="M13 7.6 V4.8 A4 4 0 0 0 9 .8 H8 V7.6Z" fill="#cfcfcf"/></svg>
<div class="t" style="left:507px;top:1063px;color:#bdbdbd;text-shadow:none">Call Menu</div>
<div class="t" style="left:747px;top:1063px;color:#bdbdbd;text-shadow:none">Collection | Camera | Verts:8 | Faces:6 | Tri</div>
<div style="left:0px;top:1078px;width:960px;height:2px;background:#0c0c0c"></div>
<div style="left:0px;top:31px;width:1px;height:1047px;background:#7a7a7a"></div>
<div style="left:959px;top:31px;width:1px;height:1047px;background:#8a8a8a"></div>
<svg style="left:137px;top:17px;" width="14" height="22" viewBox="0 0 14 22"><path d="M1 1 V17 L4.8 13.4 L7.4 19.6 L10 18.4 L7.4 12.4 H12.4Z" fill="#fff" stroke="#000" stroke-width="1"/></svg>
<div style="left:639px;top:984px;font:20px 'Liberation Sans',sans-serif;color:rgba(255,255,255,.43);white-space:nowrap;line-height:24px">Activate Windows</div>
<div style="left:639px;top:1009px;font:15px 'Liberation Sans',sans-serif;color:rgba(255,255,255,.43);white-space:nowrap;line-height:20px">Go to Settings to activate Windows.</div>
</body></html>
